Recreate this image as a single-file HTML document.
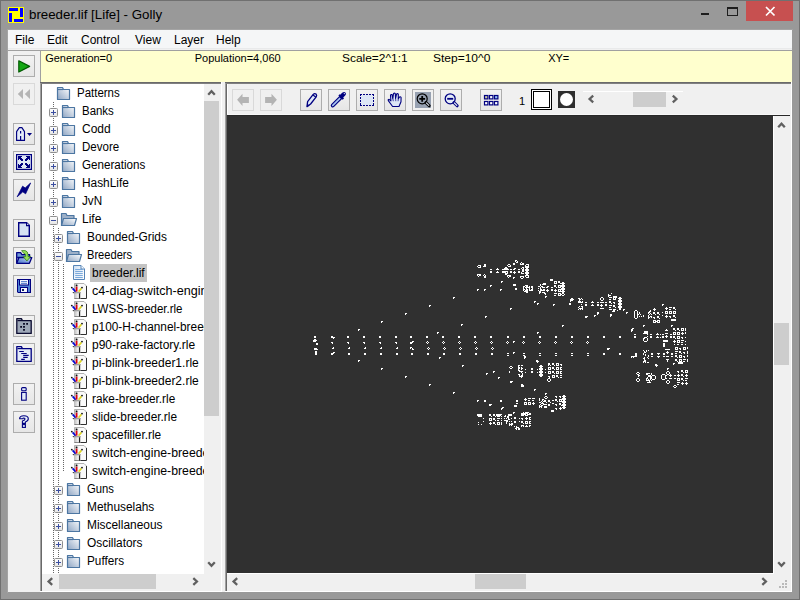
<!DOCTYPE html>
<html><head><meta charset="utf-8">
<style>
*{margin:0;padding:0;box-sizing:border-box}
html,body{width:800px;height:600px;overflow:hidden;background:#999}
body{position:relative;font-family:"Liberation Sans",sans-serif;font-size:12px;color:#000}
.a{position:absolute;display:block}
.t{position:absolute;white-space:pre;line-height:12px}
.btn{position:absolute;width:22px;height:22px;border:1px solid #adadad;background:linear-gradient(#f2f2f2,#e6e6e6)}
.dis{position:absolute;width:22px;height:22px;border:1px solid #d9d9d9;background:#f0f0f0}
</style></head><body>

<div class="a" style="left:0px;top:0px;width:800px;height:600px;background:#999;border:1px solid #707070"></div>
<div class="a" style="left:8px;top:7px;width:16px;height:16px;background:#ff0;"></div>
<div class="a" style="left:9px;top:8px;width:9px;height:3px;background:#00f;"></div>
<div class="a" style="left:20px;top:8px;width:3px;height:9px;background:#00f;"></div>
<div class="a" style="left:9px;top:13px;width:3px;height:9px;background:#00f;"></div>
<div class="a" style="left:14px;top:19px;width:9px;height:3px;background:#00f;"></div>
<div class="t" style="left:29px;top:8px;font-size:13.3px;line-height:13px">breeder.lif [Life] - Golly</div>
<div class="a" style="left:701px;top:13px;width:8px;height:2px;background:#1e1e1e;"></div>
<div class="a" style="left:727px;top:7px;width:11px;height:9px;border:1px solid #1e1e1e;border-top-width:2px"></div>
<div class="a" style="left:746px;top:1px;width:47px;height:20px;background:#c75050;"></div>
<svg class="a" style="left:746px;top:1px;" width="47" height="20" viewBox="746 1 47 20"><path d="M766 7 L774.5 15.5 M774.5 7 L766 15.5" stroke="#fff" stroke-width="1.7"/></svg>
<div class="a" style="left:7px;top:29px;width:786px;height:1px;background:#a4a4a4;"></div>
<div class="a" style="left:7px;top:29px;width:1px;height:564px;background:#a4a4a4;"></div>
<div class="a" style="left:8px;top:30px;width:784px;height:562px;background:#f0f0f0;"></div>
<div class="a" style="left:8px;top:30px;width:784px;height:18px;background:#f5f6f7;"></div>
<div class="a" style="left:8px;top:48px;width:784px;height:1px;background:#e9eaeb;"></div>
<div class="a" style="left:8px;top:49px;width:784px;height:1px;background:#f0f0f0;"></div>
<div class="a" style="left:8px;top:50px;width:784px;height:1px;background:#a0a0a0;"></div>
<div class="t" style="left:15px;top:34px;">File</div>
<div class="t" style="left:47px;top:34px;">Edit</div>
<div class="t" style="left:81px;top:34px;">Control</div>
<div class="t" style="left:135px;top:34px;">View</div>
<div class="t" style="left:174px;top:34px;">Layer</div>
<div class="t" style="left:216px;top:34px;">Help</div>
<div class="a" style="left:40px;top:51px;width:1px;height:541px;background:#a0a0a0;"></div>
<div class="a" style="left:41px;top:51px;width:751px;height:31px;background:#ffffce;"></div>
<div class="t" style="left:45.2px;top:52.3px;font-size:11px;line-height:12px;transform:scaleX(1);transform-origin:0 0">Generation=0</div>
<div class="t" style="left:194.7px;top:52.3px;font-size:11px;line-height:12px;transform:scaleX(1.0);transform-origin:0 0">Population=4,060</div>
<div class="t" style="left:341.6px;top:52.3px;font-size:11px;line-height:12px;transform:scaleX(1.085);transform-origin:0 0">Scale=2^1:1</div>
<div class="t" style="left:433.2px;top:52.3px;font-size:11px;line-height:12px;transform:scaleX(1.09);transform-origin:0 0">Step=10^0</div>
<div class="t" style="left:548.2px;top:52.3px;font-size:11px;line-height:12px;transform:scaleX(1);transform-origin:0 0">XY=</div>
<div class="btn" style="left:13px;top:55px"></div>
<svg class="a" style="left:13px;top:55px;" width="22" height="22" viewBox="13 55 22 22"><path d="M18.8 60.8 L29.6 66.4 L18.8 72 Z" fill="#14a814" stroke="#005a00" stroke-width="1.2" stroke-linejoin="round"/></svg>
<div class="dis" style="left:13px;top:83px"></div>
<svg class="a" style="left:13px;top:83px;" width="22" height="22" viewBox="13 83 22 22"><path d="M17.8 94 L23 89 L23 99 Z M24.8 94 L30 89 L30 99 Z" fill="#b4b4b4"/></svg>
<div class="btn" style="left:13px;top:123px"></div>
<svg class="a" style="left:13px;top:123px;" width="22" height="22" viewBox="13 123 22 22"><path d="M16.6 140.4 L16.6 131.6 L19.3 127.6 L21.9 127.6 L24.5 131.6 L24.5 140.4 Z" fill="#e4ecf8" stroke="#000080" stroke-width="1.15" stroke-linejoin="round"/><path d="M20.6 131 L20.6 133.6 M20.6 136 L20.6 140.5" stroke="#000080" stroke-width="1.2"/><path d="M27 133 L32 133 L29.5 136 Z" fill="#000080"/></svg>
<div class="btn" style="left:13px;top:151px"></div>
<svg class="a" style="left:13px;top:151px;" width="22" height="22" viewBox="13 151 22 22"><rect x="16" y="154" width="16" height="16" fill="#000080"/><rect x="17.2" y="155.2" width="13.6" height="13.6" fill="#e0e8f6"/><path d="M18 156h1v1h-1zM19 156h1v1h-1zM20 156h1v1h-1zM21 156h1v1h-1zM18 157h1v1h-1zM19 157h1v1h-1zM20 157h1v1h-1zM18 158h1v1h-1zM19 158h1v1h-1zM20 158h1v1h-1zM21 158h1v1h-1zM18 159h1v1h-1zM20 159h1v1h-1zM21 159h1v1h-1zM22 159h1v1h-1zM21 160h1v1h-1zM22 160h1v1h-1zM29 156h1v1h-1zM28 156h1v1h-1zM27 156h1v1h-1zM26 156h1v1h-1zM29 157h1v1h-1zM28 157h1v1h-1zM27 157h1v1h-1zM29 158h1v1h-1zM28 158h1v1h-1zM27 158h1v1h-1zM26 158h1v1h-1zM29 159h1v1h-1zM27 159h1v1h-1zM26 159h1v1h-1zM25 159h1v1h-1zM26 160h1v1h-1zM25 160h1v1h-1zM18 167h1v1h-1zM19 167h1v1h-1zM20 167h1v1h-1zM21 167h1v1h-1zM18 166h1v1h-1zM19 166h1v1h-1zM20 166h1v1h-1zM18 165h1v1h-1zM19 165h1v1h-1zM20 165h1v1h-1zM21 165h1v1h-1zM18 164h1v1h-1zM20 164h1v1h-1zM21 164h1v1h-1zM22 164h1v1h-1zM21 163h1v1h-1zM22 163h1v1h-1zM29 167h1v1h-1zM28 167h1v1h-1zM27 167h1v1h-1zM26 167h1v1h-1zM29 166h1v1h-1zM28 166h1v1h-1zM27 166h1v1h-1zM29 165h1v1h-1zM28 165h1v1h-1zM27 165h1v1h-1zM26 165h1v1h-1zM29 164h1v1h-1zM27 164h1v1h-1zM26 164h1v1h-1zM25 164h1v1h-1zM26 163h1v1h-1zM25 163h1v1h-1z" fill="#000080" shape-rendering="crispEdges"/></svg>
<div class="btn" style="left:13px;top:179px"></div>
<svg class="a" style="left:13px;top:179px;" width="22" height="22" viewBox="13 179 22 22"><path d="M17.2 196.8 L22.6 186.2 L25.2 188 L30.6 183 L25.6 193.8 L22.8 191.8 Z" fill="#000080" stroke="#000080" stroke-width="0.8" stroke-linejoin="round"/></svg>
<div class="btn" style="left:13px;top:219px"></div>
<svg class="a" style="left:13px;top:219px;" width="22" height="22" viewBox="13 219 22 22"><path d="M18.7 222.7 L26.6 222.7 L29.3 225.4 L29.3 236.3 L18.7 236.3 Z" fill="#d6e2f4" stroke="#000080" stroke-width="1.4"/><path d="M26.6 222.7 L26.6 225.6 L29.3 225.6" fill="#fff" stroke="#000080" stroke-width="1.2"/></svg>
<div class="btn" style="left:13px;top:247px"></div>
<svg class="a" style="left:13px;top:247px;" width="22" height="22" viewBox="13 247 22 22"><defs><linearGradient id="og" x1="0" y1="1" x2="1" y2="0"><stop offset="0" stop-color="#3c6cc8"/><stop offset="1" stop-color="#cfe0f8"/></linearGradient></defs><path d="M16.7 263.3 L16.7 252.7 L20.6 252.7 L22 254.6 L29.6 254.6 L29.6 257.5 L17.5 257.5" fill="#6f98d8" stroke="#000080" stroke-width="1.3" stroke-linejoin="round"/><path d="M16.7 263.3 L19 257.6 L31.8 257.6 L29.4 263.3 Z" fill="url(#og)" stroke="#000080" stroke-width="1.3" stroke-linejoin="round"/><path d="M21.6 250.6 L25.2 250.6 Q28 251.4 28 254.6 L28 256.6 L30.6 256.6 L26.9 261 L23.2 256.6 L25.6 256.6 L25.6 255 Q25.4 253.4 23.6 253.2 Z" fill="#96e05a" stroke="#2d7a10" stroke-width="0.7" stroke-linejoin="round"/></svg>
<div class="btn" style="left:13px;top:275px"></div>
<svg class="a" style="left:13px;top:275px;" width="22" height="22" viewBox="13 275 22 22"><path d="M17 279 H31 V293 H18 L17 292 Z" fill="#000080"/><rect x="18" y="280" width="12" height="12" fill="#4f82d2"/><rect x="19.5" y="279.5" width="9" height="5.5" fill="#f4f7fd" stroke="#000080" stroke-width="1"/><path d="M21 281.6 H27 M21 283.4 H27" stroke="#3d6cc4" stroke-width="0.9"/><rect x="20.5" y="287.5" width="7" height="5" fill="#f4f7fd" stroke="#000080" stroke-width="1"/><rect x="22" y="289" width="2" height="2" fill="#102060"/></svg>
<div class="btn" style="left:13px;top:315px"></div>
<svg class="a" style="left:13px;top:315px;" width="22" height="22" viewBox="13 315 22 22"><path d="M16.8 333.4 L16.8 318.6 L21.4 318.6 L22.4 320.6 L31.2 320.6 L31.2 333.4 Z" fill="#9ea8b8" stroke="#0a0a30" stroke-width="1.3" stroke-linejoin="round"/><path d="M17.5 320.6 L22 320.6" stroke="#0a0a30" stroke-width="1.2"/><path d="M23.1 323 h1.8 v1.8 h-1.8 Z M26.2 323 h1.8 v1.8 h-1.8 Z M20.2 326 h1.8 v1.8 h-1.8 Z M23.1 326 h1.8 v1.8 h-1.8 Z M23.1 329 h1.8 v1.8 h-1.8 Z" fill="#050520"/></svg>
<div class="btn" style="left:13px;top:343px"></div>
<svg class="a" style="left:13px;top:343px;" width="22" height="22" viewBox="13 343 22 22"><path d="M16.8 361.4 L16.8 346.6 L21.4 346.6 L22.4 348.6 L31.2 348.6 L31.2 361.4 Z" fill="#e3ebf8" stroke="#000080" stroke-width="1.3" stroke-linejoin="round"/><path d="M17.5 348.6 L22 348.6" stroke="#000080" stroke-width="1.2"/><path d="M19.2 351.5 L23.8 351.5 M21.2 353.5 L26.7 353.5 M23.2 355.4 L28.7 355.4 M23.2 357.4 L27.7 357.4 M21.2 359.4 L24.8 359.4" stroke="#000080" stroke-width="1.1"/></svg>
<div class="btn" style="left:13px;top:383px"></div>
<svg class="a" style="left:13px;top:383px;" width="22" height="22" viewBox="13 383 22 22"><rect x="21.6" y="387.6" width="4.6" height="3.2" rx="1" fill="#e3ebf8" stroke="#000080" stroke-width="1.1"/><rect x="21.6" y="392.4" width="4.6" height="7.8" fill="#e3ebf8" stroke="#000080" stroke-width="1.1"/></svg>
<div class="btn" style="left:13px;top:411px"></div>
<svg class="a" style="left:13px;top:411px;" width="22" height="22" viewBox="13 411 22 22"><path d="M19.6 418.8 Q19.6 415.8 23.9 415.8 Q28.3 415.8 28.3 418.8 Q28.3 421 25.4 422 L25.4 423.4 L22.4 423.4 L22.4 421 Q25 420.4 25 419 Q25 418 23.9 418 Q22.9 418 22.9 418.8 Z" fill="#e3ebf8" stroke="#000080" stroke-width="1.1" stroke-linejoin="round"/><rect x="22.4" y="424.6" width="3" height="2.8" fill="#e3ebf8" stroke="#000080" stroke-width="1.1"/></svg>
<div class="a" style="left:40px;top:82px;width:182px;height:510px;background:#fff;"></div>
<div class="a" style="left:40px;top:82px;width:1px;height:510px;background:#a0a0a0;"></div>
<div class="a" style="left:41px;top:83px;width:1px;height:508px;background:#696969;"></div>
<div class="a" style="left:40px;top:82px;width:182px;height:1px;background:#6a6a6a;"></div>
<div class="a" style="left:41px;top:83px;width:180px;height:1px;background:#808080;"></div>
<div class="a" style="left:221px;top:82px;width:1px;height:510px;background:#fff;"></div>
<div class="a" style="left:40px;top:591px;width:182px;height:1px;background:#fff;"></div>
<div class="a" style="left:204px;top:84px;width:17px;height:490px;background:#f0f0f0;"></div>
<div class="a" style="left:204px;top:101px;width:15px;height:315px;background:#cdcdcd;"></div>
<svg class="a" style="left:205px;top:86px;" width="12" height="12" viewBox="205 86 12 12"><path d="M208.2 94.7 L211.5 91.1 L214.8 94.7" fill="none" stroke="#606060" stroke-width="2.3"/></svg>
<svg class="a" style="left:205px;top:558px;" width="12" height="12" viewBox="205 558 12 12"><path d="M208.2 562.3 L211.5 565.9 L214.8 562.3" fill="none" stroke="#606060" stroke-width="2.3"/></svg>
<div class="a" style="left:42px;top:574px;width:179px;height:17px;background:#f0f0f0;"></div>
<div class="a" style="left:59px;top:574px;width:97px;height:15px;background:#cdcdcd;"></div>
<svg class="a" style="left:44px;top:575px;" width="12" height="12" viewBox="44 575 12 12"><path d="M52.2 578.2 L48.6 581.5 L52.2 584.8" fill="none" stroke="#606060" stroke-width="2.3"/></svg>
<svg class="a" style="left:189px;top:575px;" width="12" height="12" viewBox="189 575 12 12"><path d="M193.3 578.2 L196.9 581.5 L193.3 584.8" fill="none" stroke="#606060" stroke-width="2.3"/></svg>
<div class="a" style="left:42px;top:84px;width:162px;height:490px;overflow:hidden">
<svg class="a" style="left:0;top:0" width="162" height="490" viewBox="42 84 162 490"><defs><linearGradient id="fg" x1="0" y1="1" x2="1" y2="0"><stop offset="0" stop-color="#8ea5c3"/><stop offset="1" stop-color="#ffffff"/></linearGradient><linearGradient id="dg" x1="0" y1="0" x2="1" y2="1"><stop offset="0" stop-color="#c4daf2"/><stop offset="0.5" stop-color="#f4f8fd"/><stop offset="1" stop-color="#ffffff"/></linearGradient><linearGradient id="rg" x1="0" y1="0" x2="1" y2="0"><stop offset="0" stop-color="#c4c4c4"/><stop offset="1" stop-color="#fafafa"/></linearGradient><linearGradient id="cg" x1="0" y1="0" x2="1" y2="0"><stop offset="0" stop-color="#b8b8b8"/><stop offset="0.6" stop-color="#f4f4f4"/><stop offset="1" stop-color="#d0d0d0"/></linearGradient><linearGradient id="eg" x1="0" y1="0" x2="0" y2="1"><stop offset="0" stop-color="#ffffff"/><stop offset="1" stop-color="#e4e4e4"/></linearGradient></defs><path d="M53.5 102 L53.5 574" stroke="#666" stroke-width="1" stroke-dasharray="1 1"/><path d="M58.5 228 L58.5 574" stroke="#666" stroke-width="1" stroke-dasharray="1 1"/><path d="M63.5 264 L63.5 471" stroke="#666" stroke-width="1" stroke-dasharray="1 1"/><path d="M57.5 99.5 L57.5 87.5 L62.5 87.5 L63.5 89.5 L69.5 89.5 L69.5 99.5 Z" fill="url(#fg)" stroke="#4c76a2" stroke-width="1.2" stroke-linejoin="round"/><path d="M58 89.5 L63 89.5" stroke="#4c76a2" stroke-width="1.2"/><path d="M62.5 117.5 L62.5 105.5 L67.5 105.5 L68.5 107.5 L74.5 107.5 L74.5 117.5 Z" fill="url(#fg)" stroke="#4c76a2" stroke-width="1.2" stroke-linejoin="round"/><path d="M63 107.5 L68 107.5" stroke="#4c76a2" stroke-width="1.2"/><rect x="49.5" y="108.5" width="8" height="8" rx="1" fill="url(#eg)" stroke="#8f8f8f" stroke-width="1"/><path d="M51 112.5 L56 112.5" stroke="#3b4ea0" stroke-width="1"/><path d="M53.5 110 L53.5 115" stroke="#3b4ea0" stroke-width="1"/><path d="M62.5 135.5 L62.5 123.5 L67.5 123.5 L68.5 125.5 L74.5 125.5 L74.5 135.5 Z" fill="url(#fg)" stroke="#4c76a2" stroke-width="1.2" stroke-linejoin="round"/><path d="M63 125.5 L68 125.5" stroke="#4c76a2" stroke-width="1.2"/><rect x="49.5" y="126.5" width="8" height="8" rx="1" fill="url(#eg)" stroke="#8f8f8f" stroke-width="1"/><path d="M51 130.5 L56 130.5" stroke="#3b4ea0" stroke-width="1"/><path d="M53.5 128 L53.5 133" stroke="#3b4ea0" stroke-width="1"/><path d="M62.5 153.5 L62.5 141.5 L67.5 141.5 L68.5 143.5 L74.5 143.5 L74.5 153.5 Z" fill="url(#fg)" stroke="#4c76a2" stroke-width="1.2" stroke-linejoin="round"/><path d="M63 143.5 L68 143.5" stroke="#4c76a2" stroke-width="1.2"/><rect x="49.5" y="144.5" width="8" height="8" rx="1" fill="url(#eg)" stroke="#8f8f8f" stroke-width="1"/><path d="M51 148.5 L56 148.5" stroke="#3b4ea0" stroke-width="1"/><path d="M53.5 146 L53.5 151" stroke="#3b4ea0" stroke-width="1"/><path d="M62.5 171.5 L62.5 159.5 L67.5 159.5 L68.5 161.5 L74.5 161.5 L74.5 171.5 Z" fill="url(#fg)" stroke="#4c76a2" stroke-width="1.2" stroke-linejoin="round"/><path d="M63 161.5 L68 161.5" stroke="#4c76a2" stroke-width="1.2"/><rect x="49.5" y="162.5" width="8" height="8" rx="1" fill="url(#eg)" stroke="#8f8f8f" stroke-width="1"/><path d="M51 166.5 L56 166.5" stroke="#3b4ea0" stroke-width="1"/><path d="M53.5 164 L53.5 169" stroke="#3b4ea0" stroke-width="1"/><path d="M62.5 189.5 L62.5 177.5 L67.5 177.5 L68.5 179.5 L74.5 179.5 L74.5 189.5 Z" fill="url(#fg)" stroke="#4c76a2" stroke-width="1.2" stroke-linejoin="round"/><path d="M63 179.5 L68 179.5" stroke="#4c76a2" stroke-width="1.2"/><rect x="49.5" y="180.5" width="8" height="8" rx="1" fill="url(#eg)" stroke="#8f8f8f" stroke-width="1"/><path d="M51 184.5 L56 184.5" stroke="#3b4ea0" stroke-width="1"/><path d="M53.5 182 L53.5 187" stroke="#3b4ea0" stroke-width="1"/><path d="M62.5 207.5 L62.5 195.5 L67.5 195.5 L68.5 197.5 L74.5 197.5 L74.5 207.5 Z" fill="url(#fg)" stroke="#4c76a2" stroke-width="1.2" stroke-linejoin="round"/><path d="M63 197.5 L68 197.5" stroke="#4c76a2" stroke-width="1.2"/><rect x="49.5" y="198.5" width="8" height="8" rx="1" fill="url(#eg)" stroke="#8f8f8f" stroke-width="1"/><path d="M51 202.5 L56 202.5" stroke="#3b4ea0" stroke-width="1"/><path d="M53.5 200 L53.5 205" stroke="#3b4ea0" stroke-width="1"/><path d="M61.5 225.5 L61.5 213.5 L66 213.5 L67 215.5 L74 215.5 L74 225.5 Z" fill="#9db0c8" stroke="#4c76a2" stroke-width="1.2" stroke-linejoin="round"/><path d="M63.5 218.5 L76.5 218.5 L74.5 225.5 L61.5 225.5 Z" fill="url(#fg)" stroke="#4c76a2" stroke-width="1.2" stroke-linejoin="round"/><rect x="49.5" y="216.5" width="8" height="8" rx="1" fill="url(#eg)" stroke="#8f8f8f" stroke-width="1"/><path d="M51 220.5 L56 220.5" stroke="#3b4ea0" stroke-width="1"/><path d="M67.5 243.5 L67.5 231.5 L72.5 231.5 L73.5 233.5 L79.5 233.5 L79.5 243.5 Z" fill="url(#fg)" stroke="#4c76a2" stroke-width="1.2" stroke-linejoin="round"/><path d="M68 233.5 L73 233.5" stroke="#4c76a2" stroke-width="1.2"/><rect x="54.5" y="234.5" width="8" height="8" rx="1" fill="url(#eg)" stroke="#8f8f8f" stroke-width="1"/><path d="M56 238.5 L61 238.5" stroke="#3b4ea0" stroke-width="1"/><path d="M58.5 236 L58.5 241" stroke="#3b4ea0" stroke-width="1"/><path d="M66.5 261.5 L66.5 249.5 L71 249.5 L72 251.5 L79 251.5 L79 261.5 Z" fill="#9db0c8" stroke="#4c76a2" stroke-width="1.2" stroke-linejoin="round"/><path d="M68.5 254.5 L81.5 254.5 L79.5 261.5 L66.5 261.5 Z" fill="url(#fg)" stroke="#4c76a2" stroke-width="1.2" stroke-linejoin="round"/><rect x="54.5" y="252.5" width="8" height="8" rx="1" fill="url(#eg)" stroke="#8f8f8f" stroke-width="1"/><path d="M56 256.5 L61 256.5" stroke="#3b4ea0" stroke-width="1"/><path d="M73.5 265.5 L81 265.5 L84.5 269 L84.5 279.5 L73.5 279.5 Z" fill="url(#dg)" stroke="#5685b8" stroke-width="1"/><path d="M81 265.5 L81 269 L84.5 269" fill="#fff" stroke="#5685b8" stroke-width="1"/><path d="M75.2 269.6 L82.8 269.6" stroke="#6fa2d8" stroke-width="1"/><path d="M75.2 271.6 L82.8 271.6" stroke="#6fa2d8" stroke-width="1"/><path d="M75.2 273.6 L82.8 273.6" stroke="#6fa2d8" stroke-width="1"/><path d="M75.2 275.6 L82.8 275.6" stroke="#6fa2d8" stroke-width="1"/><path d="M75.2 277.6 L82.8 277.6" stroke="#6fa2d8" stroke-width="1"/><path d="M74.5 283.5 L84 283.5 L86.5 286 L86.5 298.5 L74.5 298.5 Z" fill="#fafafa"/><rect x="74.5" y="283.5" width="4.5" height="15" fill="url(#rg)"/><path d="M74.5 298.5 L74.5 283.5 L84 283.5 L86.5 286" fill="none" stroke="#b0b0b0" stroke-width="1"/><path d="M86.5 286 L86.5 298.5 L74.5 298.5" fill="none" stroke="#303030" stroke-width="1"/><rect x="74" y="292.2" width="6.8" height="6.3" fill="url(#cg)"/><path d="M73.6 292.7 L80.8 292.7" stroke="#9a9a9a" stroke-width="1.2"/><path d="M79.5 293.3 L79.5 298.6" stroke="#202020" stroke-width="1.1"/><path d="M72.6 288.4 L75.6 291.8" stroke="#0008d8" stroke-width="1.7"/><path d="M76.6 286.6 L76.6 291.6" stroke="#e00010" stroke-width="1.7"/><path d="M81.4 288.4 L78.6 291.8" stroke="#e0d820" stroke-width="1.7"/><circle cx="71.8" cy="287.6" r="0.9" fill="#111"/><circle cx="76.6" cy="285.4" r="0.9" fill="#111"/><circle cx="82" cy="287.6" r="0.9" fill="#111"/><circle cx="73.3" cy="292.6" r="0.6" fill="#111"/><path d="M74.5 301.5 L84 301.5 L86.5 304 L86.5 316.5 L74.5 316.5 Z" fill="#fafafa"/><rect x="74.5" y="301.5" width="4.5" height="15" fill="url(#rg)"/><path d="M74.5 316.5 L74.5 301.5 L84 301.5 L86.5 304" fill="none" stroke="#b0b0b0" stroke-width="1"/><path d="M86.5 304 L86.5 316.5 L74.5 316.5" fill="none" stroke="#303030" stroke-width="1"/><rect x="74" y="310.2" width="6.8" height="6.3" fill="url(#cg)"/><path d="M73.6 310.7 L80.8 310.7" stroke="#9a9a9a" stroke-width="1.2"/><path d="M79.5 311.3 L79.5 316.6" stroke="#202020" stroke-width="1.1"/><path d="M72.6 306.4 L75.6 309.8" stroke="#0008d8" stroke-width="1.7"/><path d="M76.6 304.6 L76.6 309.6" stroke="#e00010" stroke-width="1.7"/><path d="M81.4 306.4 L78.6 309.8" stroke="#e0d820" stroke-width="1.7"/><circle cx="71.8" cy="305.6" r="0.9" fill="#111"/><circle cx="76.6" cy="303.4" r="0.9" fill="#111"/><circle cx="82" cy="305.6" r="0.9" fill="#111"/><circle cx="73.3" cy="310.6" r="0.6" fill="#111"/><path d="M74.5 319.5 L84 319.5 L86.5 322 L86.5 334.5 L74.5 334.5 Z" fill="#fafafa"/><rect x="74.5" y="319.5" width="4.5" height="15" fill="url(#rg)"/><path d="M74.5 334.5 L74.5 319.5 L84 319.5 L86.5 322" fill="none" stroke="#b0b0b0" stroke-width="1"/><path d="M86.5 322 L86.5 334.5 L74.5 334.5" fill="none" stroke="#303030" stroke-width="1"/><rect x="74" y="328.2" width="6.8" height="6.3" fill="url(#cg)"/><path d="M73.6 328.7 L80.8 328.7" stroke="#9a9a9a" stroke-width="1.2"/><path d="M79.5 329.3 L79.5 334.6" stroke="#202020" stroke-width="1.1"/><path d="M72.6 324.4 L75.6 327.8" stroke="#0008d8" stroke-width="1.7"/><path d="M76.6 322.6 L76.6 327.6" stroke="#e00010" stroke-width="1.7"/><path d="M81.4 324.4 L78.6 327.8" stroke="#e0d820" stroke-width="1.7"/><circle cx="71.8" cy="323.6" r="0.9" fill="#111"/><circle cx="76.6" cy="321.4" r="0.9" fill="#111"/><circle cx="82" cy="323.6" r="0.9" fill="#111"/><circle cx="73.3" cy="328.6" r="0.6" fill="#111"/><path d="M74.5 337.5 L84 337.5 L86.5 340 L86.5 352.5 L74.5 352.5 Z" fill="#fafafa"/><rect x="74.5" y="337.5" width="4.5" height="15" fill="url(#rg)"/><path d="M74.5 352.5 L74.5 337.5 L84 337.5 L86.5 340" fill="none" stroke="#b0b0b0" stroke-width="1"/><path d="M86.5 340 L86.5 352.5 L74.5 352.5" fill="none" stroke="#303030" stroke-width="1"/><rect x="74" y="346.2" width="6.8" height="6.3" fill="url(#cg)"/><path d="M73.6 346.7 L80.8 346.7" stroke="#9a9a9a" stroke-width="1.2"/><path d="M79.5 347.3 L79.5 352.6" stroke="#202020" stroke-width="1.1"/><path d="M72.6 342.4 L75.6 345.8" stroke="#0008d8" stroke-width="1.7"/><path d="M76.6 340.6 L76.6 345.6" stroke="#e00010" stroke-width="1.7"/><path d="M81.4 342.4 L78.6 345.8" stroke="#e0d820" stroke-width="1.7"/><circle cx="71.8" cy="341.6" r="0.9" fill="#111"/><circle cx="76.6" cy="339.4" r="0.9" fill="#111"/><circle cx="82" cy="341.6" r="0.9" fill="#111"/><circle cx="73.3" cy="346.6" r="0.6" fill="#111"/><path d="M74.5 355.5 L84 355.5 L86.5 358 L86.5 370.5 L74.5 370.5 Z" fill="#fafafa"/><rect x="74.5" y="355.5" width="4.5" height="15" fill="url(#rg)"/><path d="M74.5 370.5 L74.5 355.5 L84 355.5 L86.5 358" fill="none" stroke="#b0b0b0" stroke-width="1"/><path d="M86.5 358 L86.5 370.5 L74.5 370.5" fill="none" stroke="#303030" stroke-width="1"/><rect x="74" y="364.2" width="6.8" height="6.3" fill="url(#cg)"/><path d="M73.6 364.7 L80.8 364.7" stroke="#9a9a9a" stroke-width="1.2"/><path d="M79.5 365.3 L79.5 370.6" stroke="#202020" stroke-width="1.1"/><path d="M72.6 360.4 L75.6 363.8" stroke="#0008d8" stroke-width="1.7"/><path d="M76.6 358.6 L76.6 363.6" stroke="#e00010" stroke-width="1.7"/><path d="M81.4 360.4 L78.6 363.8" stroke="#e0d820" stroke-width="1.7"/><circle cx="71.8" cy="359.6" r="0.9" fill="#111"/><circle cx="76.6" cy="357.4" r="0.9" fill="#111"/><circle cx="82" cy="359.6" r="0.9" fill="#111"/><circle cx="73.3" cy="364.6" r="0.6" fill="#111"/><path d="M74.5 373.5 L84 373.5 L86.5 376 L86.5 388.5 L74.5 388.5 Z" fill="#fafafa"/><rect x="74.5" y="373.5" width="4.5" height="15" fill="url(#rg)"/><path d="M74.5 388.5 L74.5 373.5 L84 373.5 L86.5 376" fill="none" stroke="#b0b0b0" stroke-width="1"/><path d="M86.5 376 L86.5 388.5 L74.5 388.5" fill="none" stroke="#303030" stroke-width="1"/><rect x="74" y="382.2" width="6.8" height="6.3" fill="url(#cg)"/><path d="M73.6 382.7 L80.8 382.7" stroke="#9a9a9a" stroke-width="1.2"/><path d="M79.5 383.3 L79.5 388.6" stroke="#202020" stroke-width="1.1"/><path d="M72.6 378.4 L75.6 381.8" stroke="#0008d8" stroke-width="1.7"/><path d="M76.6 376.6 L76.6 381.6" stroke="#e00010" stroke-width="1.7"/><path d="M81.4 378.4 L78.6 381.8" stroke="#e0d820" stroke-width="1.7"/><circle cx="71.8" cy="377.6" r="0.9" fill="#111"/><circle cx="76.6" cy="375.4" r="0.9" fill="#111"/><circle cx="82" cy="377.6" r="0.9" fill="#111"/><circle cx="73.3" cy="382.6" r="0.6" fill="#111"/><path d="M74.5 391.5 L84 391.5 L86.5 394 L86.5 406.5 L74.5 406.5 Z" fill="#fafafa"/><rect x="74.5" y="391.5" width="4.5" height="15" fill="url(#rg)"/><path d="M74.5 406.5 L74.5 391.5 L84 391.5 L86.5 394" fill="none" stroke="#b0b0b0" stroke-width="1"/><path d="M86.5 394 L86.5 406.5 L74.5 406.5" fill="none" stroke="#303030" stroke-width="1"/><rect x="74" y="400.2" width="6.8" height="6.3" fill="url(#cg)"/><path d="M73.6 400.7 L80.8 400.7" stroke="#9a9a9a" stroke-width="1.2"/><path d="M79.5 401.3 L79.5 406.6" stroke="#202020" stroke-width="1.1"/><path d="M72.6 396.4 L75.6 399.8" stroke="#0008d8" stroke-width="1.7"/><path d="M76.6 394.6 L76.6 399.6" stroke="#e00010" stroke-width="1.7"/><path d="M81.4 396.4 L78.6 399.8" stroke="#e0d820" stroke-width="1.7"/><circle cx="71.8" cy="395.6" r="0.9" fill="#111"/><circle cx="76.6" cy="393.4" r="0.9" fill="#111"/><circle cx="82" cy="395.6" r="0.9" fill="#111"/><circle cx="73.3" cy="400.6" r="0.6" fill="#111"/><path d="M74.5 409.5 L84 409.5 L86.5 412 L86.5 424.5 L74.5 424.5 Z" fill="#fafafa"/><rect x="74.5" y="409.5" width="4.5" height="15" fill="url(#rg)"/><path d="M74.5 424.5 L74.5 409.5 L84 409.5 L86.5 412" fill="none" stroke="#b0b0b0" stroke-width="1"/><path d="M86.5 412 L86.5 424.5 L74.5 424.5" fill="none" stroke="#303030" stroke-width="1"/><rect x="74" y="418.2" width="6.8" height="6.3" fill="url(#cg)"/><path d="M73.6 418.7 L80.8 418.7" stroke="#9a9a9a" stroke-width="1.2"/><path d="M79.5 419.3 L79.5 424.6" stroke="#202020" stroke-width="1.1"/><path d="M72.6 414.4 L75.6 417.8" stroke="#0008d8" stroke-width="1.7"/><path d="M76.6 412.6 L76.6 417.6" stroke="#e00010" stroke-width="1.7"/><path d="M81.4 414.4 L78.6 417.8" stroke="#e0d820" stroke-width="1.7"/><circle cx="71.8" cy="413.6" r="0.9" fill="#111"/><circle cx="76.6" cy="411.4" r="0.9" fill="#111"/><circle cx="82" cy="413.6" r="0.9" fill="#111"/><circle cx="73.3" cy="418.6" r="0.6" fill="#111"/><path d="M74.5 427.5 L84 427.5 L86.5 430 L86.5 442.5 L74.5 442.5 Z" fill="#fafafa"/><rect x="74.5" y="427.5" width="4.5" height="15" fill="url(#rg)"/><path d="M74.5 442.5 L74.5 427.5 L84 427.5 L86.5 430" fill="none" stroke="#b0b0b0" stroke-width="1"/><path d="M86.5 430 L86.5 442.5 L74.5 442.5" fill="none" stroke="#303030" stroke-width="1"/><rect x="74" y="436.2" width="6.8" height="6.3" fill="url(#cg)"/><path d="M73.6 436.7 L80.8 436.7" stroke="#9a9a9a" stroke-width="1.2"/><path d="M79.5 437.3 L79.5 442.6" stroke="#202020" stroke-width="1.1"/><path d="M72.6 432.4 L75.6 435.8" stroke="#0008d8" stroke-width="1.7"/><path d="M76.6 430.6 L76.6 435.6" stroke="#e00010" stroke-width="1.7"/><path d="M81.4 432.4 L78.6 435.8" stroke="#e0d820" stroke-width="1.7"/><circle cx="71.8" cy="431.6" r="0.9" fill="#111"/><circle cx="76.6" cy="429.4" r="0.9" fill="#111"/><circle cx="82" cy="431.6" r="0.9" fill="#111"/><circle cx="73.3" cy="436.6" r="0.6" fill="#111"/><path d="M74.5 445.5 L84 445.5 L86.5 448 L86.5 460.5 L74.5 460.5 Z" fill="#fafafa"/><rect x="74.5" y="445.5" width="4.5" height="15" fill="url(#rg)"/><path d="M74.5 460.5 L74.5 445.5 L84 445.5 L86.5 448" fill="none" stroke="#b0b0b0" stroke-width="1"/><path d="M86.5 448 L86.5 460.5 L74.5 460.5" fill="none" stroke="#303030" stroke-width="1"/><rect x="74" y="454.2" width="6.8" height="6.3" fill="url(#cg)"/><path d="M73.6 454.7 L80.8 454.7" stroke="#9a9a9a" stroke-width="1.2"/><path d="M79.5 455.3 L79.5 460.6" stroke="#202020" stroke-width="1.1"/><path d="M72.6 450.4 L75.6 453.8" stroke="#0008d8" stroke-width="1.7"/><path d="M76.6 448.6 L76.6 453.6" stroke="#e00010" stroke-width="1.7"/><path d="M81.4 450.4 L78.6 453.8" stroke="#e0d820" stroke-width="1.7"/><circle cx="71.8" cy="449.6" r="0.9" fill="#111"/><circle cx="76.6" cy="447.4" r="0.9" fill="#111"/><circle cx="82" cy="449.6" r="0.9" fill="#111"/><circle cx="73.3" cy="454.6" r="0.6" fill="#111"/><path d="M74.5 463.5 L84 463.5 L86.5 466 L86.5 478.5 L74.5 478.5 Z" fill="#fafafa"/><rect x="74.5" y="463.5" width="4.5" height="15" fill="url(#rg)"/><path d="M74.5 478.5 L74.5 463.5 L84 463.5 L86.5 466" fill="none" stroke="#b0b0b0" stroke-width="1"/><path d="M86.5 466 L86.5 478.5 L74.5 478.5" fill="none" stroke="#303030" stroke-width="1"/><rect x="74" y="472.2" width="6.8" height="6.3" fill="url(#cg)"/><path d="M73.6 472.7 L80.8 472.7" stroke="#9a9a9a" stroke-width="1.2"/><path d="M79.5 473.3 L79.5 478.6" stroke="#202020" stroke-width="1.1"/><path d="M72.6 468.4 L75.6 471.8" stroke="#0008d8" stroke-width="1.7"/><path d="M76.6 466.6 L76.6 471.6" stroke="#e00010" stroke-width="1.7"/><path d="M81.4 468.4 L78.6 471.8" stroke="#e0d820" stroke-width="1.7"/><circle cx="71.8" cy="467.6" r="0.9" fill="#111"/><circle cx="76.6" cy="465.4" r="0.9" fill="#111"/><circle cx="82" cy="467.6" r="0.9" fill="#111"/><circle cx="73.3" cy="472.6" r="0.6" fill="#111"/><path d="M67.5 495.5 L67.5 483.5 L72.5 483.5 L73.5 485.5 L79.5 485.5 L79.5 495.5 Z" fill="url(#fg)" stroke="#4c76a2" stroke-width="1.2" stroke-linejoin="round"/><path d="M68 485.5 L73 485.5" stroke="#4c76a2" stroke-width="1.2"/><rect x="54.5" y="486.5" width="8" height="8" rx="1" fill="url(#eg)" stroke="#8f8f8f" stroke-width="1"/><path d="M56 490.5 L61 490.5" stroke="#3b4ea0" stroke-width="1"/><path d="M58.5 488 L58.5 493" stroke="#3b4ea0" stroke-width="1"/><path d="M67.5 513.5 L67.5 501.5 L72.5 501.5 L73.5 503.5 L79.5 503.5 L79.5 513.5 Z" fill="url(#fg)" stroke="#4c76a2" stroke-width="1.2" stroke-linejoin="round"/><path d="M68 503.5 L73 503.5" stroke="#4c76a2" stroke-width="1.2"/><rect x="54.5" y="504.5" width="8" height="8" rx="1" fill="url(#eg)" stroke="#8f8f8f" stroke-width="1"/><path d="M56 508.5 L61 508.5" stroke="#3b4ea0" stroke-width="1"/><path d="M58.5 506 L58.5 511" stroke="#3b4ea0" stroke-width="1"/><path d="M67.5 531.5 L67.5 519.5 L72.5 519.5 L73.5 521.5 L79.5 521.5 L79.5 531.5 Z" fill="url(#fg)" stroke="#4c76a2" stroke-width="1.2" stroke-linejoin="round"/><path d="M68 521.5 L73 521.5" stroke="#4c76a2" stroke-width="1.2"/><rect x="54.5" y="522.5" width="8" height="8" rx="1" fill="url(#eg)" stroke="#8f8f8f" stroke-width="1"/><path d="M56 526.5 L61 526.5" stroke="#3b4ea0" stroke-width="1"/><path d="M58.5 524 L58.5 529" stroke="#3b4ea0" stroke-width="1"/><path d="M67.5 549.5 L67.5 537.5 L72.5 537.5 L73.5 539.5 L79.5 539.5 L79.5 549.5 Z" fill="url(#fg)" stroke="#4c76a2" stroke-width="1.2" stroke-linejoin="round"/><path d="M68 539.5 L73 539.5" stroke="#4c76a2" stroke-width="1.2"/><rect x="54.5" y="540.5" width="8" height="8" rx="1" fill="url(#eg)" stroke="#8f8f8f" stroke-width="1"/><path d="M56 544.5 L61 544.5" stroke="#3b4ea0" stroke-width="1"/><path d="M58.5 542 L58.5 547" stroke="#3b4ea0" stroke-width="1"/><path d="M67.5 567.5 L67.5 555.5 L72.5 555.5 L73.5 557.5 L79.5 557.5 L79.5 567.5 Z" fill="url(#fg)" stroke="#4c76a2" stroke-width="1.2" stroke-linejoin="round"/><path d="M68 557.5 L73 557.5" stroke="#4c76a2" stroke-width="1.2"/><rect x="54.5" y="558.5" width="8" height="8" rx="1" fill="url(#eg)" stroke="#8f8f8f" stroke-width="1"/><path d="M56 562.5 L61 562.5" stroke="#3b4ea0" stroke-width="1"/><path d="M58.5 560 L58.5 565" stroke="#3b4ea0" stroke-width="1"/></svg>
<div class="a" style="left:48px;top:180px;width:57px;height:18px;background:#c3c3c3"></div>
<div class="t" style="left:35px;top:3px;transform:scaleX(0.955);transform-origin:0 0">Patterns</div>
<div class="t" style="left:40px;top:21px;transform:scaleX(0.953);transform-origin:0 0">Banks</div>
<div class="t" style="left:40px;top:39px;transform:scaleX(1.0);transform-origin:0 0">Codd</div>
<div class="t" style="left:40px;top:57px;transform:scaleX(0.961);transform-origin:0 0">Devore</div>
<div class="t" style="left:40px;top:75px;transform:scaleX(0.969);transform-origin:0 0">Generations</div>
<div class="t" style="left:40px;top:93px;transform:scaleX(0.989);transform-origin:0 0">HashLife</div>
<div class="t" style="left:40px;top:111px;transform:scaleX(0.974);transform-origin:0 0">JvN</div>
<div class="t" style="left:40px;top:129px;transform:scaleX(1.0);transform-origin:0 0">Life</div>
<div class="t" style="left:45px;top:147px;transform:scaleX(0.99);transform-origin:0 0">Bounded-Grids</div>
<div class="t" style="left:45px;top:165px;transform:scaleX(0.927);transform-origin:0 0">Breeders</div>
<div class="t" style="left:50px;top:183px;transform:scaleX(1.0);transform-origin:0 0">breeder.lif</div>
<div class="t" style="left:50px;top:201px;transform:scaleX(1.05);transform-origin:0 0">c4-diag-switch-engines.rle</div>
<div class="t" style="left:50px;top:219px;transform:scaleX(0.958);transform-origin:0 0">LWSS-breeder.rle</div>
<div class="t" style="left:50px;top:237px;transform:scaleX(0.985);transform-origin:0 0">p100-H-channel-breeder.rle</div>
<div class="t" style="left:50px;top:255px;transform:scaleX(1.0);transform-origin:0 0">p90-rake-factory.rle</div>
<div class="t" style="left:50px;top:273px;transform:scaleX(1.0);transform-origin:0 0">pi-blink-breeder1.rle</div>
<div class="t" style="left:50px;top:291px;transform:scaleX(1.0);transform-origin:0 0">pi-blink-breeder2.rle</div>
<div class="t" style="left:50px;top:309px;transform:scaleX(0.982);transform-origin:0 0">rake-breeder.rle</div>
<div class="t" style="left:50px;top:327px;transform:scaleX(0.988);transform-origin:0 0">slide-breeder.rle</div>
<div class="t" style="left:50px;top:345px;transform:scaleX(0.988);transform-origin:0 0">spacefiller.rle</div>
<div class="t" style="left:50px;top:363px;transform:scaleX(1.023);transform-origin:0 0">switch-engine-breeder-1.rle</div>
<div class="t" style="left:50px;top:381px;transform:scaleX(1.023);transform-origin:0 0">switch-engine-breeder-2.rle</div>
<div class="t" style="left:45px;top:399px;transform:scaleX(0.938);transform-origin:0 0">Guns</div>
<div class="t" style="left:45px;top:417px;transform:scaleX(0.989);transform-origin:0 0">Methuselahs</div>
<div class="t" style="left:45px;top:435px;transform:scaleX(0.993);transform-origin:0 0">Miscellaneous</div>
<div class="t" style="left:45px;top:453px;transform:scaleX(0.991);transform-origin:0 0">Oscillators</div>
<div class="t" style="left:45px;top:471px;transform:scaleX(0.98);transform-origin:0 0">Puffers</div>
</div>
<div class="a" style="left:225px;top:82px;width:567px;height:510px;background:#f0f0f0;"></div>
<div class="a" style="left:225px;top:82px;width:1px;height:510px;background:#a0a0a0;"></div>
<div class="a" style="left:226px;top:83px;width:1px;height:508px;background:#696969;"></div>
<div class="a" style="left:225px;top:82px;width:567px;height:1px;background:#6a6a6a;"></div>
<div class="a" style="left:226px;top:83px;width:565px;height:1px;background:#808080;"></div>
<div class="a" style="left:791px;top:82px;width:1px;height:510px;background:#fff;"></div>
<div class="a" style="left:225px;top:591px;width:567px;height:1px;background:#fff;"></div>
<div class="a" style="left:227px;top:84px;width:1px;height:31px;background:#fff;"></div>
<div class="a" style="left:227px;top:114px;width:563px;height:1px;background:#f8f8f8;"></div>
<div class="a" style="left:227px;top:115px;width:563px;height:1px;background:#282828;"></div>
<div class="dis" style="left:232px;top:89px"></div>
<svg class="a" style="left:232px;top:89px;" width="22" height="22" viewBox="232 89 22 22"><path d="M237.1 99.8 L242.5 93.8 L242.5 97.1 L248.9 97.1 L248.9 102.9 L242.5 102.9 L242.5 105.9 Z" fill="#b4b4b4"/></svg>
<div class="dis" style="left:260px;top:89px"></div>
<svg class="a" style="left:260px;top:89px;" width="22" height="22" viewBox="260 89 22 22"><path d="M276.9 99.8 L271.5 93.8 L271.5 97.1 L265.1 97.1 L265.1 102.9 L271.5 102.9 L271.5 105.9 Z" fill="#b4b4b4"/></svg>
<div class="btn" style="left:300px;top:89px"></div>
<svg class="a" style="left:300px;top:89px;" width="22" height="22" viewBox="300 89 22 22"><path d="M307 106.6 L307.6 101.6 L313.2 94.4 Q314.6 93 316 94 Q317.2 95.2 316.2 96.8 L310.6 104 Z" fill="#dfe8f8" stroke="#000080" stroke-width="1.3" stroke-linejoin="round"/><path d="M313 95 L316 97.2" stroke="#000080" stroke-width="1.1"/><path d="M306.8 107 L307.4 104 L309.6 105.4 Z" fill="#000080"/></svg>
<div class="btn" style="left:328px;top:89px"></div>
<svg class="a" style="left:328px;top:89px;" width="22" height="22" viewBox="328 89 22 22"><path d="M331.8 106.6 Q330.8 105.6 331.8 104.4 L339.6 96.6 L341.6 98.6 L333.8 106.4 Q332.8 107.4 331.8 106.6 Z" fill="#a8c4f0" stroke="#000080" stroke-width="1.2" stroke-linejoin="round"/><path d="M338.4 95.6 L342.6 99.8 L344 98.4 L343.2 97.6 L345.2 95.6 Q346.8 93.6 345.4 92.4 Q344 91.2 342.2 92.8 L340.2 94.8 L339.6 94.2 Z" fill="#000080"/><circle cx="344.3" cy="93.6" r="0.6" fill="#fff"/></svg>
<div class="btn" style="left:356px;top:89px"></div>
<svg class="a" style="left:356px;top:89px;" width="22" height="22" viewBox="356 89 22 22"><rect x="361" y="95" width="12" height="10" fill="#dde6f6"/><path d="M360 94h1v1h-1zM360 105h1v1h-1zM361 94h1v1h-1zM361 105h1v1h-1zM363 94h1v1h-1zM363 105h1v1h-1zM364 94h1v1h-1zM364 105h1v1h-1zM366 94h1v1h-1zM366 105h1v1h-1zM367 94h1v1h-1zM367 105h1v1h-1zM369 94h1v1h-1zM369 105h1v1h-1zM370 94h1v1h-1zM370 105h1v1h-1zM372 94h1v1h-1zM372 105h1v1h-1zM373 94h1v1h-1zM373 105h1v1h-1zM360 94h1v1h-1zM373 94h1v1h-1zM360 95h1v1h-1zM373 95h1v1h-1zM360 97h1v1h-1zM373 97h1v1h-1zM360 98h1v1h-1zM373 98h1v1h-1zM360 100h1v1h-1zM373 100h1v1h-1zM360 101h1v1h-1zM373 101h1v1h-1zM360 103h1v1h-1zM373 103h1v1h-1zM360 104h1v1h-1zM373 104h1v1h-1z" fill="#000080" shape-rendering="crispEdges"/></svg>
<div class="btn" style="left:384px;top:89px"></div>
<svg class="a" style="left:384px;top:89px;" width="22" height="22" viewBox="384 89 22 22"><path d="M392.6 106.5 L388.3 100.6 Q387.9 99.3 389.1 99.3 L390.9 100.8 L390.5 95.4 Q390.9 94.2 392 94.6 L392.8 98.6 L393.5 93.6 Q394.4 92.7 395.3 93.6 L395.6 98.4 L396.6 94 Q397.5 93.3 398.3 94.2 L398.3 98.8 L399.6 96.9 Q400.6 96.4 401.1 97.4 L401 101.8 L399 106.5 Z" fill="#dde6f6" stroke="#000080" stroke-width="1.1" stroke-linejoin="round"/><path d="M392.9 98.8 L393.3 101.2 M395.6 98.6 L395.8 101.2 M398.3 98.8 L398.1 101.2" stroke="#000080" stroke-width="0.7"/></svg>
<div class="btn" style="left:412px;top:89px;background:#f0f0f0"></div>
<div class="a" style="left:415px;top:92px;width:16px;height:16px;background:#98a2b2;"></div>
<svg class="a" style="left:412px;top:89px;" width="22" height="22" viewBox="412 89 22 22"><circle cx="422.2" cy="98.8" r="5" fill="none" stroke="#000" stroke-width="1.2"/><path d="M426 102.6 L429.2 105.8" stroke="#000" stroke-width="3" stroke-linecap="round"/><path d="M426.4 103 L428.8 105.4" stroke="#c8d0dc" stroke-width="1.1" stroke-linecap="round"/><path d="M419.3 98.8 L425.1 98.8 M422.2 95.9 L422.2 101.7" stroke="#000" stroke-width="1.8"/></svg>
<div class="btn" style="left:440px;top:89px"></div>
<svg class="a" style="left:440px;top:89px;" width="22" height="22" viewBox="440 89 22 22"><circle cx="450.2" cy="98.8" r="5" fill="#e4ecf8" stroke="#000080" stroke-width="1.3"/><path d="M454 102.6 L457.2 105.8" stroke="#000080" stroke-width="3" stroke-linecap="round"/><path d="M454.4 103 L456.8 105.4" stroke="#e4ecf8" stroke-width="1.1" stroke-linecap="round"/><path d="M447.2 98.8 L453.2 98.8" stroke="#000080" stroke-width="1.8"/></svg>
<div class="btn" style="left:480px;top:89px"></div>
<svg class="a" style="left:480px;top:89px;" width="22" height="22" viewBox="480 89 22 22"><rect x="484.5" y="95.5" width="3.4" height="3.4" fill="#c8c8a0" stroke="#000080" stroke-width="1.2"/><rect x="489.5" y="95.5" width="3.4" height="3.4" fill="#fff" stroke="#000080" stroke-width="1.2"/><rect x="494.5" y="95.5" width="3.4" height="3.4" fill="#90c0f0" stroke="#000080" stroke-width="1.2"/><rect x="484.5" y="101.5" width="3.4" height="3.4" fill="#fff" stroke="#000080" stroke-width="1.2"/><rect x="489.5" y="101.5" width="3.4" height="3.4" fill="#fff" stroke="#000080" stroke-width="1.2"/><rect x="494.5" y="101.5" width="3.4" height="3.4" fill="#fff" stroke="#000080" stroke-width="1.2"/></svg>
<div class="t" style="left:519px;top:95px;font-size:11px;line-height:12px">1</div>
<svg class="a" style="left:531px;top:89px;" width="21" height="21" viewBox="531 89 21 21"><rect x="531.5" y="89.5" width="20" height="20" fill="#fff" stroke="#000" stroke-width="1"/><rect x="533.5" y="91.5" width="16" height="16" fill="#fff" stroke="#000" stroke-width="1"/></svg>
<div class="a" style="left:558px;top:91px;width:17px;height:17px;background:#2e2e2e;"></div>
<svg class="a" style="left:558px;top:91px;" width="17" height="17" viewBox="558 91 17 17"><circle cx="566.5" cy="99.5" r="6.5" fill="#fff"/></svg>
<div class="a" style="left:583px;top:91px;width:100px;height:1px;background:#fff;"></div>
<svg class="a" style="left:585px;top:93px;" width="12" height="12" viewBox="585 93 12 12"><path d="M593.2 95.7 L589.6 99 L593.2 102.3" fill="none" stroke="#606060" stroke-width="2.3"/></svg>
<svg class="a" style="left:669px;top:93px;" width="12" height="12" viewBox="669 93 12 12"><path d="M672.8 95.7 L676.4 99 L672.8 102.3" fill="none" stroke="#606060" stroke-width="2.3"/></svg>
<div class="a" style="left:633px;top:92px;width:33px;height:15px;background:#cdcdcd;"></div>
<div class="a" style="left:227px;top:116px;width:546px;height:457px;background:#303030;"></div>
<div class="a" style="left:773px;top:116px;width:1px;height:458px;background:#fff;"></div>
<div class="a" style="left:227px;top:573px;width:547px;height:1px;background:#fff;"></div>
<div class="a" style="left:774px;top:116px;width:17px;height:458px;background:#f0f0f0;"></div>
<div class="a" style="left:774px;top:323px;width:15px;height:42px;background:#cdcdcd;"></div>
<svg class="a" style="left:775px;top:119px;" width="12" height="12" viewBox="775 119 12 12"><path d="M778.2 127.2 L781.5 123.6 L784.8 127.2" fill="none" stroke="#606060" stroke-width="2.3"/></svg>
<svg class="a" style="left:775px;top:558px;" width="12" height="12" viewBox="775 558 12 12"><path d="M778.2 562.3 L781.5 565.9 L784.8 562.3" fill="none" stroke="#606060" stroke-width="2.3"/></svg>
<div class="a" style="left:227px;top:574px;width:547px;height:17px;background:#f0f0f0;"></div>
<div class="a" style="left:475px;top:574px;width:51px;height:15px;background:#cdcdcd;"></div>
<svg class="a" style="left:229px;top:575px;" width="12" height="12" viewBox="229 575 12 12"><path d="M237.2 578.2 L233.6 581.5 L237.2 584.8" fill="none" stroke="#606060" stroke-width="2.3"/></svg>
<svg class="a" style="left:758px;top:575px;" width="12" height="12" viewBox="758 575 12 12"><path d="M762.3 578.2 L765.9 581.5 L762.3 584.8" fill="none" stroke="#606060" stroke-width="2.3"/></svg>
<div class="a" style="left:774px;top:574px;width:17px;height:17px;background:#f0f0f0;"></div>
<svg class="a" style="left:774px;top:574px;" width="17" height="17" viewBox="774 574 17 17"><rect x="785" y="580" width="2" height="2" fill="#b9b9b9"/><rect x="782" y="583" width="2" height="2" fill="#b9b9b9"/><rect x="785" y="583" width="2" height="2" fill="#b9b9b9"/><rect x="779" y="586" width="2" height="2" fill="#b9b9b9"/><rect x="782" y="586" width="2" height="2" fill="#b9b9b9"/><rect x="785" y="586" width="2" height="2" fill="#b9b9b9"/></svg>
<svg class="a" style="left:227px;top:116px" width="546" height="457" viewBox="227 116 546 457" shape-rendering="crispEdges"><path d="M313 340h1v1h-1zM313 341h1v1h-1zM314 336h1v1h-1zM314 337h1v1h-1zM314 339h1v1h-1zM314 340h1v1h-1zM314 341h1v1h-1zM314 348h1v1h-1zM314 349h1v1h-1zM315 336h1v1h-1zM315 337h1v1h-1zM315 339h1v1h-1zM315 340h1v1h-1zM315 341h1v1h-1zM315 348h1v1h-1zM315 349h1v1h-1zM315 351h1v1h-1zM315 352h1v1h-1zM315 353h1v1h-1zM315 354h1v1h-1zM316 340h1v1h-1zM316 343h1v1h-1zM316 344h1v1h-1zM316 348h1v1h-1zM316 349h1v1h-1zM316 351h1v1h-1zM316 352h1v1h-1zM316 353h1v1h-1zM316 354h1v1h-1zM317 343h1v1h-1zM317 344h1v1h-1zM317 349h1v1h-1zM331 336h1v1h-1zM331 337h1v1h-1zM331 342h1v1h-1zM331 353h1v1h-1zM331 354h1v1h-1zM332 336h1v1h-1zM332 337h1v1h-1zM332 342h1v1h-1zM332 343h1v1h-1zM332 348h1v1h-1zM332 353h1v1h-1zM332 354h1v1h-1zM333 337h1v1h-1zM333 338h1v1h-1zM333 347h1v1h-1zM333 348h1v1h-1zM333 352h1v1h-1zM333 353h1v1h-1zM334 337h1v1h-1zM334 352h1v1h-1zM347 336h1v1h-1zM347 337h1v1h-1zM347 342h1v1h-1zM348 336h1v1h-1zM348 337h1v1h-1zM348 342h1v1h-1zM348 343h1v1h-1zM348 348h1v1h-1zM348 353h1v1h-1zM348 354h1v1h-1zM349 347h1v1h-1zM349 348h1v1h-1zM349 353h1v1h-1zM349 354h1v1h-1zM358 329h1v1h-1zM358 330h1v1h-1zM358 360h1v1h-1zM358 361h1v1h-1zM359 329h1v1h-1zM359 360h1v1h-1zM363 336h1v1h-1zM363 337h1v1h-1zM363 342h1v1h-1zM364 336h1v1h-1zM364 337h1v1h-1zM364 342h1v1h-1zM364 343h1v1h-1zM364 348h1v1h-1zM364 353h1v1h-1zM364 354h1v1h-1zM365 347h1v1h-1zM365 348h1v1h-1zM365 353h1v1h-1zM365 354h1v1h-1zM379 336h1v1h-1zM379 337h1v1h-1zM379 342h1v1h-1zM380 336h1v1h-1zM380 337h1v1h-1zM380 342h1v1h-1zM380 343h1v1h-1zM380 348h1v1h-1zM380 353h1v1h-1zM380 354h1v1h-1zM381 321h1v1h-1zM381 322h1v1h-1zM381 347h1v1h-1zM381 348h1v1h-1zM381 353h1v1h-1zM381 354h1v1h-1zM381 368h1v1h-1zM381 369h1v1h-1zM382 321h1v1h-1zM382 368h1v1h-1zM395 336h1v1h-1zM395 337h1v1h-1zM395 342h1v1h-1zM396 336h1v1h-1zM396 337h1v1h-1zM396 342h1v1h-1zM396 343h1v1h-1zM396 348h1v1h-1zM396 353h1v1h-1zM396 354h1v1h-1zM397 347h1v1h-1zM397 348h1v1h-1zM397 353h1v1h-1zM397 354h1v1h-1zM405 313h1v1h-1zM405 314h1v1h-1zM405 376h1v1h-1zM405 377h1v1h-1zM406 313h1v1h-1zM406 376h1v1h-1zM410 336h1v1h-1zM410 337h1v1h-1zM410 342h1v1h-1zM410 343h1v1h-1zM410 347h1v1h-1zM410 348h1v1h-1zM411 336h1v1h-1zM411 337h1v1h-1zM411 342h1v1h-1zM411 343h1v1h-1zM411 347h1v1h-1zM411 353h1v1h-1zM411 354h1v1h-1zM412 341h1v1h-1zM412 342h1v1h-1zM412 348h1v1h-1zM412 349h1v1h-1zM412 353h1v1h-1zM412 354h1v1h-1zM413 341h1v1h-1zM413 349h1v1h-1zM426 336h1v1h-1zM426 337h1v1h-1zM426 342h1v1h-1zM427 336h1v1h-1zM427 337h1v1h-1zM427 341h1v1h-1zM427 343h1v1h-1zM427 348h1v1h-1zM427 353h1v1h-1zM427 354h1v1h-1zM428 342h1v1h-1zM428 347h1v1h-1zM428 349h1v1h-1zM428 353h1v1h-1zM428 354h1v1h-1zM429 305h1v1h-1zM429 306h1v1h-1zM429 348h1v1h-1zM429 384h1v1h-1zM429 385h1v1h-1zM430 305h1v1h-1zM430 384h1v1h-1zM437 332h1v1h-1zM437 333h1v1h-1zM438 332h1v1h-1zM439 357h1v1h-1zM439 358h1v1h-1zM440 357h1v1h-1zM442 336h1v1h-1zM442 337h1v1h-1zM442 342h1v1h-1zM443 336h1v1h-1zM443 337h1v1h-1zM443 341h1v1h-1zM443 343h1v1h-1zM443 348h1v1h-1zM443 353h1v1h-1zM443 354h1v1h-1zM444 342h1v1h-1zM444 347h1v1h-1zM444 349h1v1h-1zM444 353h1v1h-1zM444 354h1v1h-1zM445 348h1v1h-1zM453 297h1v1h-1zM453 298h1v1h-1zM453 392h1v1h-1zM453 393h1v1h-1zM454 297h1v1h-1zM454 392h1v1h-1zM458 336h1v1h-1zM458 337h1v1h-1zM458 342h1v1h-1zM459 336h1v1h-1zM459 337h1v1h-1zM459 341h1v1h-1zM459 343h1v1h-1zM459 348h1v1h-1zM459 353h1v1h-1zM459 354h1v1h-1zM460 342h1v1h-1zM460 347h1v1h-1zM460 349h1v1h-1zM460 353h1v1h-1zM460 354h1v1h-1zM461 324h1v1h-1zM461 325h1v1h-1zM461 348h1v1h-1zM462 324h1v1h-1zM462 365h1v1h-1zM462 366h1v1h-1zM463 365h1v1h-1zM474 336h1v1h-1zM474 337h1v1h-1zM474 342h1v1h-1zM475 336h1v1h-1zM475 337h1v1h-1zM475 341h1v1h-1zM475 343h1v1h-1zM475 348h1v1h-1zM475 353h1v1h-1zM475 354h1v1h-1zM476 342h1v1h-1zM476 347h1v1h-1zM476 349h1v1h-1zM476 353h1v1h-1zM476 354h1v1h-1zM477 266h1v1h-1zM477 274h1v1h-1zM477 275h1v1h-1zM477 289h1v1h-1zM477 290h1v1h-1zM477 348h1v1h-1zM477 400h1v1h-1zM477 401h1v1h-1zM477 414h1v1h-1zM477 415h1v1h-1zM478 265h1v1h-1zM478 267h1v1h-1zM478 274h1v1h-1zM478 276h1v1h-1zM478 289h1v1h-1zM478 400h1v1h-1zM478 414h1v1h-1zM478 415h1v1h-1zM478 416h1v1h-1zM478 422h1v1h-1zM478 424h1v1h-1zM479 265h1v1h-1zM479 267h1v1h-1zM479 274h1v1h-1zM479 275h1v1h-1zM479 414h1v1h-1zM479 415h1v1h-1zM479 416h1v1h-1zM480 265h1v1h-1zM480 266h1v1h-1zM480 267h1v1h-1zM480 274h1v1h-1zM480 275h1v1h-1zM480 414h1v1h-1zM480 415h1v1h-1zM480 416h1v1h-1zM481 414h1v1h-1zM481 415h1v1h-1zM481 416h1v1h-1zM481 424h1v1h-1zM483 266h1v1h-1zM483 275h1v1h-1zM483 418h1v1h-1zM483 421h1v1h-1zM484 264h1v1h-1zM484 265h1v1h-1zM484 266h1v1h-1zM484 274h1v1h-1zM484 276h1v1h-1zM484 277h1v1h-1zM484 289h1v1h-1zM484 290h1v1h-1zM484 400h1v1h-1zM484 401h1v1h-1zM485 264h1v1h-1zM485 265h1v1h-1zM485 266h1v1h-1zM485 275h1v1h-1zM485 276h1v1h-1zM485 277h1v1h-1zM485 289h1v1h-1zM485 316h1v1h-1zM485 317h1v1h-1zM485 400h1v1h-1zM485 401h1v1h-1zM486 316h1v1h-1zM486 373h1v1h-1zM486 374h1v1h-1zM487 373h1v1h-1zM489 404h1v1h-1zM489 405h1v1h-1zM489 414h1v1h-1zM489 415h1v1h-1zM489 418h1v1h-1zM489 419h1v1h-1zM489 420h1v1h-1zM489 423h1v1h-1zM490 269h1v1h-1zM490 271h1v1h-1zM490 272h1v1h-1zM490 285h1v1h-1zM490 286h1v1h-1zM490 336h1v1h-1zM490 337h1v1h-1zM490 342h1v1h-1zM490 404h1v1h-1zM490 405h1v1h-1zM490 414h1v1h-1zM490 415h1v1h-1zM490 418h1v1h-1zM490 420h1v1h-1zM490 422h1v1h-1zM490 423h1v1h-1zM490 424h1v1h-1zM491 269h1v1h-1zM491 271h1v1h-1zM491 272h1v1h-1zM491 285h1v1h-1zM491 336h1v1h-1zM491 337h1v1h-1zM491 341h1v1h-1zM491 343h1v1h-1zM491 348h1v1h-1zM491 353h1v1h-1zM491 354h1v1h-1zM491 404h1v1h-1zM491 416h1v1h-1zM491 418h1v1h-1zM491 419h1v1h-1zM491 420h1v1h-1zM491 423h1v1h-1zM492 342h1v1h-1zM492 347h1v1h-1zM492 349h1v1h-1zM492 353h1v1h-1zM492 354h1v1h-1zM493 348h1v1h-1zM493 371h1v1h-1zM493 372h1v1h-1zM493 414h1v1h-1zM493 415h1v1h-1zM493 418h1v1h-1zM493 419h1v1h-1zM493 422h1v1h-1zM493 423h1v1h-1zM494 371h1v1h-1zM494 414h1v1h-1zM494 415h1v1h-1zM494 418h1v1h-1zM494 419h1v1h-1zM494 422h1v1h-1zM494 423h1v1h-1zM495 416h1v1h-1zM495 420h1v1h-1zM495 424h1v1h-1zM496 269h1v1h-1zM496 272h1v1h-1zM496 414h1v1h-1zM496 415h1v1h-1zM497 268h1v1h-1zM497 269h1v1h-1zM497 271h1v1h-1zM497 272h1v1h-1zM497 414h1v1h-1zM497 415h1v1h-1zM497 416h1v1h-1zM497 418h1v1h-1zM497 420h1v1h-1zM497 422h1v1h-1zM497 423h1v1h-1zM497 424h1v1h-1zM498 269h1v1h-1zM498 272h1v1h-1zM498 377h1v1h-1zM498 378h1v1h-1zM498 414h1v1h-1zM498 415h1v1h-1zM498 416h1v1h-1zM498 418h1v1h-1zM498 420h1v1h-1zM498 422h1v1h-1zM498 424h1v1h-1zM499 377h1v1h-1zM499 414h1v1h-1zM499 415h1v1h-1zM499 416h1v1h-1zM499 418h1v1h-1zM499 422h1v1h-1zM499 423h1v1h-1zM499 424h1v1h-1zM500 289h1v1h-1zM500 290h1v1h-1zM500 400h1v1h-1zM500 401h1v1h-1zM500 414h1v1h-1zM500 415h1v1h-1zM501 281h1v1h-1zM501 282h1v1h-1zM501 289h1v1h-1zM501 400h1v1h-1zM501 401h1v1h-1zM501 408h1v1h-1zM501 409h1v1h-1zM501 414h1v1h-1zM501 416h1v1h-1zM501 418h1v1h-1zM501 420h1v1h-1zM501 422h1v1h-1zM501 423h1v1h-1zM501 424h1v1h-1zM502 269h1v1h-1zM502 271h1v1h-1zM502 272h1v1h-1zM502 281h1v1h-1zM502 407h1v1h-1zM502 408h1v1h-1zM503 269h1v1h-1zM503 271h1v1h-1zM503 272h1v1h-1zM503 407h1v1h-1zM504 268h1v1h-1zM504 269h1v1h-1zM504 271h1v1h-1zM504 272h1v1h-1zM504 416h1v1h-1zM504 418h1v1h-1zM504 420h1v1h-1zM505 267h1v1h-1zM505 268h1v1h-1zM505 269h1v1h-1zM505 271h1v1h-1zM505 272h1v1h-1zM505 273h1v1h-1zM505 274h1v1h-1zM505 415h1v1h-1zM505 416h1v1h-1zM505 420h1v1h-1zM506 267h1v1h-1zM506 268h1v1h-1zM506 269h1v1h-1zM506 271h1v1h-1zM506 273h1v1h-1zM506 274h1v1h-1zM506 342h1v1h-1zM506 418h1v1h-1zM506 420h1v1h-1zM506 421h1v1h-1zM506 422h1v1h-1zM506 423h1v1h-1zM507 265h1v1h-1zM507 268h1v1h-1zM507 269h1v1h-1zM507 271h1v1h-1zM507 272h1v1h-1zM507 273h1v1h-1zM507 275h1v1h-1zM507 276h1v1h-1zM507 336h1v1h-1zM507 337h1v1h-1zM507 341h1v1h-1zM507 343h1v1h-1zM507 353h1v1h-1zM507 355h1v1h-1zM507 416h1v1h-1zM507 417h1v1h-1zM507 420h1v1h-1zM507 421h1v1h-1zM508 264h1v1h-1zM508 266h1v1h-1zM508 269h1v1h-1zM508 275h1v1h-1zM508 277h1v1h-1zM508 336h1v1h-1zM508 337h1v1h-1zM508 342h1v1h-1zM508 353h1v1h-1zM508 355h1v1h-1zM508 414h1v1h-1zM508 415h1v1h-1zM508 416h1v1h-1zM508 417h1v1h-1zM508 418h1v1h-1zM508 419h1v1h-1zM509 264h1v1h-1zM509 266h1v1h-1zM509 275h1v1h-1zM509 276h1v1h-1zM509 367h1v1h-1zM509 371h1v1h-1zM509 372h1v1h-1zM509 414h1v1h-1zM509 415h1v1h-1zM509 419h1v1h-1zM509 421h1v1h-1zM509 423h1v1h-1zM509 424h1v1h-1zM509 425h1v1h-1zM510 265h1v1h-1zM510 266h1v1h-1zM510 269h1v1h-1zM510 271h1v1h-1zM510 272h1v1h-1zM510 275h1v1h-1zM510 276h1v1h-1zM510 308h1v1h-1zM510 309h1v1h-1zM510 366h1v1h-1zM510 368h1v1h-1zM510 381h1v1h-1zM510 382h1v1h-1zM510 414h1v1h-1zM510 415h1v1h-1zM510 424h1v1h-1zM511 269h1v1h-1zM511 271h1v1h-1zM511 272h1v1h-1zM511 308h1v1h-1zM511 366h1v1h-1zM511 368h1v1h-1zM511 381h1v1h-1zM511 382h1v1h-1zM511 414h1v1h-1zM511 415h1v1h-1zM511 418h1v1h-1zM511 421h1v1h-1zM511 423h1v1h-1zM511 424h1v1h-1zM511 425h1v1h-1zM512 367h1v1h-1zM512 381h1v1h-1zM512 423h1v1h-1zM512 424h1v1h-1zM513 263h1v1h-1zM513 264h1v1h-1zM513 269h1v1h-1zM513 272h1v1h-1zM513 277h1v1h-1zM513 278h1v1h-1zM513 284h1v1h-1zM513 285h1v1h-1zM513 341h1v1h-1zM513 342h1v1h-1zM513 352h1v1h-1zM513 353h1v1h-1zM513 412h1v1h-1zM513 413h1v1h-1zM514 263h1v1h-1zM514 264h1v1h-1zM514 268h1v1h-1zM514 269h1v1h-1zM514 271h1v1h-1zM514 272h1v1h-1zM514 273h1v1h-1zM514 277h1v1h-1zM514 284h1v1h-1zM514 285h1v1h-1zM514 341h1v1h-1zM514 352h1v1h-1zM514 405h1v1h-1zM514 406h1v1h-1zM514 412h1v1h-1zM514 417h1v1h-1zM514 418h1v1h-1zM514 421h1v1h-1zM514 422h1v1h-1zM514 426h1v1h-1zM515 260h1v1h-1zM515 261h1v1h-1zM515 268h1v1h-1zM515 272h1v1h-1zM515 284h1v1h-1zM515 285h1v1h-1zM515 288h1v1h-1zM515 289h1v1h-1zM515 405h1v1h-1zM515 406h1v1h-1zM515 417h1v1h-1zM515 418h1v1h-1zM515 421h1v1h-1zM515 422h1v1h-1zM515 428h1v1h-1zM516 260h1v1h-1zM516 262h1v1h-1zM516 288h1v1h-1zM516 289h1v1h-1zM516 400h1v1h-1zM516 401h1v1h-1zM516 403h1v1h-1zM516 405h1v1h-1zM516 406h1v1h-1zM516 426h1v1h-1zM516 427h1v1h-1zM516 428h1v1h-1zM516 429h1v1h-1zM517 261h1v1h-1zM517 262h1v1h-1zM517 400h1v1h-1zM517 401h1v1h-1zM517 403h1v1h-1zM517 427h1v1h-1zM518 269h1v1h-1zM518 271h1v1h-1zM518 272h1v1h-1zM518 365h1v1h-1zM518 366h1v1h-1zM518 367h1v1h-1zM518 368h1v1h-1zM518 369h1v1h-1zM518 370h1v1h-1zM518 374h1v1h-1zM518 427h1v1h-1zM518 428h1v1h-1zM518 429h1v1h-1zM519 269h1v1h-1zM519 271h1v1h-1zM519 272h1v1h-1zM519 365h1v1h-1zM519 367h1v1h-1zM519 368h1v1h-1zM519 370h1v1h-1zM519 371h1v1h-1zM519 374h1v1h-1zM519 375h1v1h-1zM519 376h1v1h-1zM519 418h1v1h-1zM519 421h1v1h-1zM519 428h1v1h-1zM519 429h1v1h-1zM520 263h1v1h-1zM520 264h1v1h-1zM520 276h1v1h-1zM520 277h1v1h-1zM520 371h1v1h-1zM520 376h1v1h-1zM521 262h1v1h-1zM521 264h1v1h-1zM521 268h1v1h-1zM521 272h1v1h-1zM521 273h1v1h-1zM521 276h1v1h-1zM521 278h1v1h-1zM521 365h1v1h-1zM521 367h1v1h-1zM521 368h1v1h-1zM521 369h1v1h-1zM521 371h1v1h-1zM521 372h1v1h-1zM521 375h1v1h-1zM521 376h1v1h-1zM521 377h1v1h-1zM521 384h1v1h-1zM521 385h1v1h-1zM521 386h1v1h-1zM521 413h1v1h-1zM521 414h1v1h-1zM521 415h1v1h-1zM521 418h1v1h-1zM521 421h1v1h-1zM521 422h1v1h-1zM521 425h1v1h-1zM521 426h1v1h-1zM522 263h1v1h-1zM522 264h1v1h-1zM522 267h1v1h-1zM522 269h1v1h-1zM522 270h1v1h-1zM522 271h1v1h-1zM522 273h1v1h-1zM522 276h1v1h-1zM522 278h1v1h-1zM522 342h1v1h-1zM522 365h1v1h-1zM522 368h1v1h-1zM522 371h1v1h-1zM522 373h1v1h-1zM522 374h1v1h-1zM522 375h1v1h-1zM522 376h1v1h-1zM522 384h1v1h-1zM522 385h1v1h-1zM522 386h1v1h-1zM522 413h1v1h-1zM522 414h1v1h-1zM522 415h1v1h-1zM522 418h1v1h-1zM522 419h1v1h-1zM522 421h1v1h-1zM522 422h1v1h-1zM522 425h1v1h-1zM523 263h1v1h-1zM523 264h1v1h-1zM523 267h1v1h-1zM523 268h1v1h-1zM523 269h1v1h-1zM523 270h1v1h-1zM523 271h1v1h-1zM523 273h1v1h-1zM523 276h1v1h-1zM523 277h1v1h-1zM523 286h1v1h-1zM523 287h1v1h-1zM523 288h1v1h-1zM523 289h1v1h-1zM523 290h1v1h-1zM523 336h1v1h-1zM523 337h1v1h-1zM523 341h1v1h-1zM523 343h1v1h-1zM523 353h1v1h-1zM523 355h1v1h-1zM523 385h1v1h-1zM523 386h1v1h-1zM523 412h1v1h-1zM523 413h1v1h-1zM523 414h1v1h-1zM523 415h1v1h-1zM523 423h1v1h-1zM523 425h1v1h-1zM523 426h1v1h-1zM524 286h1v1h-1zM524 289h1v1h-1zM524 291h1v1h-1zM524 336h1v1h-1zM524 337h1v1h-1zM524 342h1v1h-1zM524 353h1v1h-1zM524 355h1v1h-1zM524 356h1v1h-1zM524 357h1v1h-1zM524 358h1v1h-1zM524 399h1v1h-1zM524 402h1v1h-1zM524 403h1v1h-1zM524 404h1v1h-1zM524 413h1v1h-1zM524 414h1v1h-1zM525 265h1v1h-1zM525 266h1v1h-1zM525 267h1v1h-1zM525 269h1v1h-1zM525 270h1v1h-1zM525 272h1v1h-1zM525 273h1v1h-1zM525 275h1v1h-1zM525 276h1v1h-1zM525 285h1v1h-1zM525 287h1v1h-1zM525 290h1v1h-1zM525 291h1v1h-1zM525 356h1v1h-1zM525 357h1v1h-1zM525 369h1v1h-1zM525 372h1v1h-1zM525 398h1v1h-1zM525 399h1v1h-1zM525 400h1v1h-1zM525 402h1v1h-1zM525 404h1v1h-1zM525 412h1v1h-1zM525 413h1v1h-1zM525 414h1v1h-1zM525 415h1v1h-1zM525 418h1v1h-1zM525 421h1v1h-1zM525 422h1v1h-1zM525 423h1v1h-1zM525 426h1v1h-1zM526 264h1v1h-1zM526 266h1v1h-1zM526 267h1v1h-1zM526 268h1v1h-1zM526 269h1v1h-1zM526 270h1v1h-1zM526 271h1v1h-1zM526 272h1v1h-1zM526 273h1v1h-1zM526 274h1v1h-1zM526 275h1v1h-1zM526 277h1v1h-1zM526 285h1v1h-1zM526 286h1v1h-1zM526 287h1v1h-1zM526 288h1v1h-1zM526 289h1v1h-1zM526 290h1v1h-1zM526 291h1v1h-1zM526 292h1v1h-1zM526 399h1v1h-1zM526 402h1v1h-1zM526 403h1v1h-1zM526 404h1v1h-1zM526 412h1v1h-1zM526 413h1v1h-1zM526 415h1v1h-1zM526 417h1v1h-1zM526 418h1v1h-1zM526 419h1v1h-1zM526 421h1v1h-1zM526 423h1v1h-1zM526 425h1v1h-1zM526 426h1v1h-1zM527 264h1v1h-1zM527 266h1v1h-1zM527 267h1v1h-1zM527 268h1v1h-1zM527 269h1v1h-1zM527 270h1v1h-1zM527 271h1v1h-1zM527 272h1v1h-1zM527 273h1v1h-1zM527 274h1v1h-1zM527 275h1v1h-1zM527 277h1v1h-1zM527 285h1v1h-1zM527 286h1v1h-1zM527 287h1v1h-1zM527 289h1v1h-1zM527 290h1v1h-1zM527 291h1v1h-1zM527 292h1v1h-1zM527 412h1v1h-1zM527 413h1v1h-1zM527 414h1v1h-1zM527 415h1v1h-1zM527 418h1v1h-1zM527 421h1v1h-1zM527 422h1v1h-1zM527 423h1v1h-1zM527 426h1v1h-1zM528 264h1v1h-1zM528 265h1v1h-1zM528 266h1v1h-1zM528 267h1v1h-1zM528 269h1v1h-1zM528 270h1v1h-1zM528 272h1v1h-1zM528 273h1v1h-1zM528 275h1v1h-1zM528 276h1v1h-1zM528 277h1v1h-1zM528 287h1v1h-1zM528 398h1v1h-1zM528 400h1v1h-1zM528 402h1v1h-1zM528 403h1v1h-1zM528 404h1v1h-1zM528 412h1v1h-1zM528 414h1v1h-1zM529 286h1v1h-1zM529 287h1v1h-1zM529 288h1v1h-1zM529 289h1v1h-1zM529 290h1v1h-1zM529 398h1v1h-1zM529 400h1v1h-1zM529 402h1v1h-1zM529 404h1v1h-1zM529 413h1v1h-1zM529 414h1v1h-1zM529 417h1v1h-1zM529 418h1v1h-1zM529 419h1v1h-1zM529 421h1v1h-1zM529 422h1v1h-1zM529 423h1v1h-1zM529 425h1v1h-1zM529 426h1v1h-1zM530 290h1v1h-1zM530 398h1v1h-1zM530 402h1v1h-1zM530 403h1v1h-1zM530 404h1v1h-1zM530 413h1v1h-1zM530 414h1v1h-1zM530 417h1v1h-1zM530 419h1v1h-1zM530 421h1v1h-1zM530 423h1v1h-1zM530 425h1v1h-1zM531 286h1v1h-1zM531 287h1v1h-1zM531 289h1v1h-1zM531 290h1v1h-1zM531 368h1v1h-1zM531 369h1v1h-1zM531 371h1v1h-1zM531 372h1v1h-1zM532 286h1v1h-1zM532 287h1v1h-1zM532 288h1v1h-1zM532 289h1v1h-1zM532 290h1v1h-1zM532 368h1v1h-1zM532 369h1v1h-1zM532 371h1v1h-1zM532 372h1v1h-1zM532 398h1v1h-1zM532 400h1v1h-1zM532 403h1v1h-1zM533 398h1v1h-1zM533 400h1v1h-1zM533 402h1v1h-1zM533 403h1v1h-1zM533 404h1v1h-1zM534 301h1v1h-1zM534 302h1v1h-1zM534 389h1v1h-1zM534 390h1v1h-1zM534 398h1v1h-1zM534 403h1v1h-1zM535 301h1v1h-1zM535 389h1v1h-1zM536 360h1v1h-1zM536 361h1v1h-1zM537 303h1v1h-1zM537 304h1v1h-1zM537 332h1v1h-1zM537 333h1v1h-1zM537 360h1v1h-1zM537 361h1v1h-1zM537 362h1v1h-1zM537 369h1v1h-1zM537 372h1v1h-1zM538 286h1v1h-1zM538 288h1v1h-1zM538 290h1v1h-1zM538 303h1v1h-1zM538 332h1v1h-1zM538 342h1v1h-1zM538 361h1v1h-1zM539 286h1v1h-1zM539 291h1v1h-1zM539 292h1v1h-1zM539 293h1v1h-1zM539 336h1v1h-1zM539 337h1v1h-1zM539 341h1v1h-1zM539 343h1v1h-1zM539 353h1v1h-1zM539 355h1v1h-1zM539 366h1v1h-1zM539 368h1v1h-1zM539 369h1v1h-1zM539 371h1v1h-1zM539 372h1v1h-1zM539 374h1v1h-1zM539 375h1v1h-1zM539 398h1v1h-1zM539 399h1v1h-1zM539 400h1v1h-1zM539 402h1v1h-1zM539 405h1v1h-1zM539 406h1v1h-1zM539 407h1v1h-1zM540 284h1v1h-1zM540 285h1v1h-1zM540 287h1v1h-1zM540 288h1v1h-1zM540 289h1v1h-1zM540 290h1v1h-1zM540 291h1v1h-1zM540 292h1v1h-1zM540 336h1v1h-1zM540 337h1v1h-1zM540 342h1v1h-1zM540 353h1v1h-1zM540 355h1v1h-1zM540 365h1v1h-1zM540 366h1v1h-1zM540 367h1v1h-1zM540 368h1v1h-1zM540 369h1v1h-1zM540 370h1v1h-1zM540 371h1v1h-1zM540 372h1v1h-1zM540 373h1v1h-1zM540 374h1v1h-1zM540 375h1v1h-1zM540 376h1v1h-1zM540 402h1v1h-1zM540 404h1v1h-1zM540 406h1v1h-1zM541 286h1v1h-1zM541 289h1v1h-1zM541 290h1v1h-1zM541 365h1v1h-1zM541 366h1v1h-1zM541 367h1v1h-1zM541 368h1v1h-1zM541 369h1v1h-1zM541 370h1v1h-1zM541 371h1v1h-1zM541 372h1v1h-1zM541 373h1v1h-1zM541 374h1v1h-1zM541 375h1v1h-1zM541 376h1v1h-1zM541 401h1v1h-1zM541 403h1v1h-1zM541 405h1v1h-1zM541 406h1v1h-1zM541 407h1v1h-1zM542 284h1v1h-1zM542 286h1v1h-1zM542 287h1v1h-1zM542 290h1v1h-1zM542 292h1v1h-1zM542 366h1v1h-1zM542 368h1v1h-1zM542 369h1v1h-1zM542 371h1v1h-1zM542 372h1v1h-1zM542 374h1v1h-1zM542 375h1v1h-1zM542 399h1v1h-1zM542 400h1v1h-1zM542 402h1v1h-1zM542 403h1v1h-1zM542 405h1v1h-1zM543 283h1v1h-1zM543 284h1v1h-1zM543 287h1v1h-1zM543 289h1v1h-1zM543 290h1v1h-1zM543 292h1v1h-1zM543 399h1v1h-1zM543 401h1v1h-1zM543 403h1v1h-1zM543 404h1v1h-1zM544 283h1v1h-1zM544 284h1v1h-1zM544 287h1v1h-1zM544 289h1v1h-1zM544 290h1v1h-1zM544 292h1v1h-1zM544 293h1v1h-1zM544 397h1v1h-1zM544 400h1v1h-1zM544 401h1v1h-1zM544 404h1v1h-1zM544 406h1v1h-1zM544 407h1v1h-1zM545 283h1v1h-1zM545 284h1v1h-1zM545 293h1v1h-1zM545 294h1v1h-1zM545 296h1v1h-1zM545 297h1v1h-1zM545 369h1v1h-1zM545 372h1v1h-1zM545 393h1v1h-1zM545 394h1v1h-1zM545 396h1v1h-1zM545 398h1v1h-1zM545 400h1v1h-1zM545 401h1v1h-1zM545 404h1v1h-1zM545 406h1v1h-1zM545 407h1v1h-1zM546 287h1v1h-1zM546 290h1v1h-1zM546 296h1v1h-1zM546 393h1v1h-1zM546 396h1v1h-1zM546 398h1v1h-1zM546 402h1v1h-1zM546 404h1v1h-1zM546 406h1v1h-1zM546 407h1v1h-1zM547 286h1v1h-1zM547 287h1v1h-1zM547 289h1v1h-1zM547 290h1v1h-1zM547 291h1v1h-1zM547 379h1v1h-1zM547 380h1v1h-1zM547 397h1v1h-1zM548 286h1v1h-1zM548 290h1v1h-1zM548 363h1v1h-1zM548 364h1v1h-1zM548 365h1v1h-1zM548 367h1v1h-1zM548 368h1v1h-1zM548 369h1v1h-1zM548 371h1v1h-1zM548 372h1v1h-1zM548 373h1v1h-1zM548 376h1v1h-1zM548 378h1v1h-1zM548 381h1v1h-1zM548 400h1v1h-1zM548 401h1v1h-1zM548 404h1v1h-1zM548 405h1v1h-1zM549 363h1v1h-1zM549 364h1v1h-1zM549 367h1v1h-1zM549 369h1v1h-1zM549 371h1v1h-1zM549 373h1v1h-1zM549 376h1v1h-1zM549 377h1v1h-1zM549 378h1v1h-1zM549 381h1v1h-1zM549 400h1v1h-1zM549 401h1v1h-1zM549 404h1v1h-1zM549 405h1v1h-1zM550 279h1v1h-1zM550 280h1v1h-1zM550 365h1v1h-1zM550 367h1v1h-1zM550 368h1v1h-1zM550 369h1v1h-1zM550 371h1v1h-1zM550 372h1v1h-1zM550 373h1v1h-1zM550 379h1v1h-1zM550 380h1v1h-1zM550 402h1v1h-1zM551 279h1v1h-1zM551 280h1v1h-1zM551 287h1v1h-1zM551 289h1v1h-1zM551 290h1v1h-1zM551 410h1v1h-1zM551 411h1v1h-1zM552 279h1v1h-1zM552 280h1v1h-1zM552 287h1v1h-1zM552 289h1v1h-1zM552 290h1v1h-1zM552 363h1v1h-1zM552 364h1v1h-1zM552 367h1v1h-1zM552 368h1v1h-1zM552 371h1v1h-1zM552 372h1v1h-1zM552 375h1v1h-1zM552 376h1v1h-1zM552 377h1v1h-1zM552 400h1v1h-1zM552 403h1v1h-1zM552 410h1v1h-1zM552 411h1v1h-1zM553 304h1v1h-1zM553 305h1v1h-1zM553 363h1v1h-1zM553 364h1v1h-1zM553 367h1v1h-1zM553 368h1v1h-1zM553 371h1v1h-1zM553 372h1v1h-1zM553 375h1v1h-1zM553 377h1v1h-1zM553 400h1v1h-1zM553 403h1v1h-1zM553 410h1v1h-1zM553 411h1v1h-1zM554 281h1v1h-1zM554 282h1v1h-1zM554 283h1v1h-1zM554 285h1v1h-1zM554 286h1v1h-1zM554 290h1v1h-1zM554 293h1v1h-1zM554 295h1v1h-1zM554 304h1v1h-1zM554 342h1v1h-1zM554 365h1v1h-1zM554 369h1v1h-1zM554 373h1v1h-1zM554 375h1v1h-1zM554 376h1v1h-1zM554 377h1v1h-1zM555 281h1v1h-1zM555 283h1v1h-1zM555 285h1v1h-1zM555 286h1v1h-1zM555 289h1v1h-1zM555 290h1v1h-1zM555 291h1v1h-1zM555 293h1v1h-1zM555 295h1v1h-1zM555 336h1v1h-1zM555 337h1v1h-1zM555 341h1v1h-1zM555 343h1v1h-1zM555 353h1v1h-1zM555 355h1v1h-1zM555 396h1v1h-1zM555 399h1v1h-1zM555 400h1v1h-1zM555 404h1v1h-1zM555 408h1v1h-1zM556 281h1v1h-1zM556 282h1v1h-1zM556 283h1v1h-1zM556 287h1v1h-1zM556 290h1v1h-1zM556 293h1v1h-1zM556 336h1v1h-1zM556 337h1v1h-1zM556 342h1v1h-1zM556 353h1v1h-1zM556 355h1v1h-1zM556 363h1v1h-1zM556 364h1v1h-1zM556 365h1v1h-1zM556 367h1v1h-1zM556 368h1v1h-1zM556 369h1v1h-1zM556 371h1v1h-1zM556 372h1v1h-1zM556 373h1v1h-1zM556 375h1v1h-1zM556 376h1v1h-1zM556 396h1v1h-1zM556 397h1v1h-1zM556 399h1v1h-1zM556 400h1v1h-1zM556 404h1v1h-1zM556 405h1v1h-1zM556 408h1v1h-1zM556 409h1v1h-1zM557 363h1v1h-1zM557 365h1v1h-1zM557 367h1v1h-1zM557 369h1v1h-1zM557 371h1v1h-1zM557 373h1v1h-1zM557 375h1v1h-1zM557 376h1v1h-1zM557 401h1v1h-1zM558 281h1v1h-1zM558 282h1v1h-1zM558 285h1v1h-1zM558 286h1v1h-1zM558 287h1v1h-1zM558 289h1v1h-1zM558 290h1v1h-1zM558 291h1v1h-1zM558 293h1v1h-1zM558 294h1v1h-1zM558 295h1v1h-1zM558 363h1v1h-1zM558 364h1v1h-1zM558 365h1v1h-1zM558 367h1v1h-1zM558 368h1v1h-1zM558 369h1v1h-1zM558 371h1v1h-1zM558 372h1v1h-1zM558 373h1v1h-1zM558 377h1v1h-1zM559 281h1v1h-1zM559 282h1v1h-1zM559 285h1v1h-1zM559 287h1v1h-1zM559 289h1v1h-1zM559 291h1v1h-1zM559 293h1v1h-1zM559 295h1v1h-1zM559 396h1v1h-1zM559 399h1v1h-1zM559 400h1v1h-1zM559 401h1v1h-1zM559 403h1v1h-1zM559 404h1v1h-1zM559 408h1v1h-1zM560 283h1v1h-1zM560 285h1v1h-1zM560 286h1v1h-1zM560 287h1v1h-1zM560 289h1v1h-1zM560 290h1v1h-1zM560 291h1v1h-1zM560 293h1v1h-1zM560 294h1v1h-1zM560 295h1v1h-1zM560 364h1v1h-1zM560 367h1v1h-1zM560 368h1v1h-1zM560 369h1v1h-1zM560 371h1v1h-1zM560 372h1v1h-1zM560 373h1v1h-1zM560 375h1v1h-1zM560 377h1v1h-1zM560 396h1v1h-1zM560 397h1v1h-1zM560 399h1v1h-1zM560 401h1v1h-1zM560 403h1v1h-1zM560 404h1v1h-1zM560 407h1v1h-1zM560 408h1v1h-1zM560 409h1v1h-1zM561 283h1v1h-1zM561 285h1v1h-1zM561 286h1v1h-1zM561 288h1v1h-1zM561 289h1v1h-1zM561 291h1v1h-1zM561 294h1v1h-1zM561 364h1v1h-1zM561 365h1v1h-1zM561 367h1v1h-1zM561 369h1v1h-1zM561 371h1v1h-1zM561 373h1v1h-1zM561 375h1v1h-1zM561 377h1v1h-1zM561 399h1v1h-1zM561 400h1v1h-1zM561 401h1v1h-1zM561 405h1v1h-1zM561 408h1v1h-1zM562 282h1v1h-1zM562 283h1v1h-1zM562 284h1v1h-1zM562 285h1v1h-1zM562 286h1v1h-1zM562 287h1v1h-1zM562 288h1v1h-1zM562 289h1v1h-1zM562 290h1v1h-1zM562 291h1v1h-1zM562 292h1v1h-1zM562 293h1v1h-1zM562 295h1v1h-1zM562 325h1v1h-1zM562 326h1v1h-1zM562 396h1v1h-1zM562 398h1v1h-1zM562 399h1v1h-1zM562 401h1v1h-1zM562 402h1v1h-1zM562 404h1v1h-1zM562 405h1v1h-1zM562 407h1v1h-1zM563 282h1v1h-1zM563 283h1v1h-1zM563 284h1v1h-1zM563 285h1v1h-1zM563 286h1v1h-1zM563 287h1v1h-1zM563 288h1v1h-1zM563 289h1v1h-1zM563 290h1v1h-1zM563 291h1v1h-1zM563 292h1v1h-1zM563 293h1v1h-1zM563 295h1v1h-1zM563 325h1v1h-1zM563 395h1v1h-1zM563 396h1v1h-1zM563 397h1v1h-1zM563 398h1v1h-1zM563 399h1v1h-1zM563 400h1v1h-1zM563 401h1v1h-1zM563 402h1v1h-1zM563 403h1v1h-1zM563 404h1v1h-1zM563 405h1v1h-1zM563 406h1v1h-1zM563 407h1v1h-1zM563 408h1v1h-1zM564 283h1v1h-1zM564 285h1v1h-1zM564 286h1v1h-1zM564 288h1v1h-1zM564 289h1v1h-1zM564 291h1v1h-1zM564 294h1v1h-1zM564 395h1v1h-1zM564 396h1v1h-1zM564 397h1v1h-1zM564 398h1v1h-1zM564 399h1v1h-1zM564 400h1v1h-1zM564 401h1v1h-1zM564 402h1v1h-1zM564 403h1v1h-1zM564 404h1v1h-1zM564 405h1v1h-1zM564 406h1v1h-1zM564 407h1v1h-1zM564 408h1v1h-1zM565 396h1v1h-1zM565 398h1v1h-1zM565 399h1v1h-1zM565 401h1v1h-1zM565 402h1v1h-1zM565 404h1v1h-1zM565 405h1v1h-1zM565 407h1v1h-1zM569 303h1v1h-1zM569 304h1v1h-1zM570 299h1v1h-1zM570 300h1v1h-1zM570 301h1v1h-1zM570 303h1v1h-1zM570 304h1v1h-1zM570 342h1v1h-1zM571 298h1v1h-1zM571 299h1v1h-1zM571 300h1v1h-1zM571 336h1v1h-1zM571 337h1v1h-1zM571 341h1v1h-1zM571 343h1v1h-1zM571 353h1v1h-1zM571 355h1v1h-1zM572 298h1v1h-1zM572 299h1v1h-1zM572 300h1v1h-1zM572 336h1v1h-1zM572 337h1v1h-1zM572 342h1v1h-1zM572 353h1v1h-1zM572 355h1v1h-1zM573 299h1v1h-1zM578 298h1v1h-1zM578 301h1v1h-1zM578 302h1v1h-1zM578 307h1v1h-1zM578 309h1v1h-1zM579 298h1v1h-1zM579 299h1v1h-1zM579 300h1v1h-1zM579 301h1v1h-1zM579 302h1v1h-1zM579 306h1v1h-1zM579 308h1v1h-1zM580 299h1v1h-1zM580 301h1v1h-1zM580 302h1v1h-1zM580 308h1v1h-1zM580 309h1v1h-1zM581 298h1v1h-1zM581 302h1v1h-1zM581 304h1v1h-1zM581 306h1v1h-1zM581 308h1v1h-1zM582 299h1v1h-1zM582 301h1v1h-1zM582 302h1v1h-1zM582 306h1v1h-1zM582 307h1v1h-1zM582 308h1v1h-1zM582 309h1v1h-1zM585 302h1v1h-1zM585 304h1v1h-1zM585 305h1v1h-1zM585 316h1v1h-1zM585 317h1v1h-1zM586 302h1v1h-1zM586 304h1v1h-1zM586 305h1v1h-1zM586 316h1v1h-1zM586 317h1v1h-1zM586 342h1v1h-1zM587 316h1v1h-1zM587 336h1v1h-1zM587 337h1v1h-1zM587 341h1v1h-1zM587 343h1v1h-1zM587 353h1v1h-1zM587 355h1v1h-1zM588 336h1v1h-1zM588 337h1v1h-1zM588 342h1v1h-1zM588 353h1v1h-1zM588 355h1v1h-1zM591 302h1v1h-1zM591 305h1v1h-1zM592 301h1v1h-1zM592 302h1v1h-1zM592 304h1v1h-1zM592 305h1v1h-1zM593 302h1v1h-1zM593 305h1v1h-1zM594 315h1v1h-1zM594 316h1v1h-1zM595 315h1v1h-1zM597 302h1v1h-1zM597 304h1v1h-1zM597 305h1v1h-1zM597 312h1v1h-1zM597 313h1v1h-1zM597 314h1v1h-1zM598 302h1v1h-1zM598 304h1v1h-1zM598 305h1v1h-1zM598 312h1v1h-1zM598 313h1v1h-1zM600 298h1v1h-1zM600 299h1v1h-1zM600 302h1v1h-1zM600 305h1v1h-1zM600 308h1v1h-1zM601 297h1v1h-1zM601 300h1v1h-1zM601 302h1v1h-1zM601 304h1v1h-1zM601 305h1v1h-1zM601 306h1v1h-1zM601 308h1v1h-1zM602 297h1v1h-1zM602 300h1v1h-1zM602 302h1v1h-1zM602 305h1v1h-1zM602 308h1v1h-1zM603 298h1v1h-1zM603 299h1v1h-1zM603 302h1v1h-1zM603 308h1v1h-1zM603 336h1v1h-1zM603 337h1v1h-1zM603 353h1v1h-1zM603 354h1v1h-1zM604 336h1v1h-1zM604 337h1v1h-1zM604 353h1v1h-1zM604 354h1v1h-1zM605 302h1v1h-1zM605 304h1v1h-1zM605 305h1v1h-1zM606 302h1v1h-1zM606 304h1v1h-1zM606 305h1v1h-1zM607 348h1v1h-1zM607 349h1v1h-1zM608 294h1v1h-1zM608 295h1v1h-1zM608 296h1v1h-1zM608 348h1v1h-1zM608 349h1v1h-1zM609 295h1v1h-1zM609 297h1v1h-1zM609 299h1v1h-1zM609 301h1v1h-1zM609 302h1v1h-1zM609 305h1v1h-1zM609 307h1v1h-1zM609 309h1v1h-1zM609 348h1v1h-1zM610 295h1v1h-1zM610 297h1v1h-1zM610 299h1v1h-1zM610 301h1v1h-1zM610 302h1v1h-1zM610 305h1v1h-1zM610 307h1v1h-1zM610 309h1v1h-1zM610 314h1v1h-1zM610 315h1v1h-1zM610 316h1v1h-1zM611 293h1v1h-1zM611 297h1v1h-1zM611 303h1v1h-1zM611 305h1v1h-1zM611 309h1v1h-1zM611 314h1v1h-1zM611 315h1v1h-1zM612 311h1v1h-1zM613 296h1v1h-1zM613 297h1v1h-1zM613 298h1v1h-1zM613 299h1v1h-1zM613 302h1v1h-1zM613 305h1v1h-1zM613 306h1v1h-1zM613 309h1v1h-1zM613 310h1v1h-1zM613 311h1v1h-1zM614 296h1v1h-1zM614 297h1v1h-1zM614 299h1v1h-1zM614 302h1v1h-1zM614 303h1v1h-1zM614 305h1v1h-1zM614 306h1v1h-1zM614 309h1v1h-1zM614 310h1v1h-1zM614 311h1v1h-1zM615 296h1v1h-1zM615 297h1v1h-1zM615 298h1v1h-1zM615 299h1v1h-1zM615 307h1v1h-1zM615 309h1v1h-1zM616 296h1v1h-1zM616 297h1v1h-1zM617 310h1v1h-1zM618 298h1v1h-1zM618 300h1v1h-1zM618 301h1v1h-1zM618 303h1v1h-1zM618 304h1v1h-1zM618 306h1v1h-1zM618 307h1v1h-1zM619 297h1v1h-1zM619 298h1v1h-1zM619 299h1v1h-1zM619 300h1v1h-1zM619 301h1v1h-1zM619 302h1v1h-1zM619 303h1v1h-1zM619 304h1v1h-1zM619 305h1v1h-1zM619 306h1v1h-1zM619 307h1v1h-1zM619 308h1v1h-1zM619 309h1v1h-1zM619 336h1v1h-1zM619 337h1v1h-1zM619 353h1v1h-1zM619 354h1v1h-1zM620 297h1v1h-1zM620 298h1v1h-1zM620 299h1v1h-1zM620 300h1v1h-1zM620 301h1v1h-1zM620 302h1v1h-1zM620 303h1v1h-1zM620 304h1v1h-1zM620 305h1v1h-1zM620 306h1v1h-1zM620 307h1v1h-1zM620 308h1v1h-1zM620 309h1v1h-1zM620 336h1v1h-1zM620 337h1v1h-1zM620 353h1v1h-1zM620 354h1v1h-1zM621 298h1v1h-1zM621 300h1v1h-1zM621 301h1v1h-1zM621 303h1v1h-1zM621 304h1v1h-1zM621 306h1v1h-1zM621 307h1v1h-1zM623 309h1v1h-1zM623 310h1v1h-1zM624 309h1v1h-1zM626 312h1v1h-1zM626 313h1v1h-1zM627 312h1v1h-1zM631 329h1v1h-1zM631 330h1v1h-1zM631 331h1v1h-1zM631 356h1v1h-1zM631 357h1v1h-1zM632 328h1v1h-1zM632 329h1v1h-1zM632 330h1v1h-1zM632 356h1v1h-1zM633 328h1v1h-1zM633 356h1v1h-1zM633 357h1v1h-1zM634 311h1v1h-1zM634 312h1v1h-1zM634 313h1v1h-1zM634 314h1v1h-1zM634 315h1v1h-1zM634 316h1v1h-1zM634 317h1v1h-1zM634 334h1v1h-1zM634 336h1v1h-1zM634 337h1v1h-1zM634 356h1v1h-1zM635 310h1v1h-1zM635 318h1v1h-1zM635 334h1v1h-1zM635 336h1v1h-1zM635 337h1v1h-1zM635 353h1v1h-1zM635 354h1v1h-1zM635 355h1v1h-1zM635 356h1v1h-1zM636 310h1v1h-1zM636 318h1v1h-1zM636 353h1v1h-1zM636 354h1v1h-1zM636 355h1v1h-1zM636 356h1v1h-1zM636 373h1v1h-1zM636 379h1v1h-1zM636 380h1v1h-1zM637 311h1v1h-1zM637 312h1v1h-1zM637 313h1v1h-1zM637 314h1v1h-1zM637 315h1v1h-1zM637 316h1v1h-1zM637 317h1v1h-1zM637 372h1v1h-1zM637 374h1v1h-1zM637 378h1v1h-1zM637 381h1v1h-1zM638 314h1v1h-1zM638 372h1v1h-1zM638 374h1v1h-1zM638 375h1v1h-1zM638 376h1v1h-1zM638 378h1v1h-1zM638 381h1v1h-1zM639 312h1v1h-1zM639 313h1v1h-1zM639 316h1v1h-1zM639 373h1v1h-1zM639 375h1v1h-1zM639 379h1v1h-1zM639 380h1v1h-1zM640 314h1v1h-1zM641 316h1v1h-1zM643 315h1v1h-1zM643 316h1v1h-1zM643 325h1v1h-1zM643 326h1v1h-1zM643 333h1v1h-1zM643 338h1v1h-1zM643 339h1v1h-1zM643 340h1v1h-1zM643 350h1v1h-1zM643 353h1v1h-1zM643 354h1v1h-1zM643 358h1v1h-1zM643 361h1v1h-1zM643 362h1v1h-1zM644 325h1v1h-1zM644 331h1v1h-1zM644 332h1v1h-1zM644 333h1v1h-1zM644 337h1v1h-1zM644 338h1v1h-1zM644 341h1v1h-1zM644 351h1v1h-1zM644 352h1v1h-1zM644 357h1v1h-1zM644 358h1v1h-1zM644 359h1v1h-1zM644 360h1v1h-1zM644 361h1v1h-1zM645 331h1v1h-1zM645 332h1v1h-1zM645 333h1v1h-1zM645 337h1v1h-1zM645 341h1v1h-1zM645 352h1v1h-1zM645 354h1v1h-1zM645 355h1v1h-1zM645 360h1v1h-1zM645 361h1v1h-1zM645 362h1v1h-1zM646 331h1v1h-1zM646 332h1v1h-1zM646 333h1v1h-1zM646 337h1v1h-1zM646 341h1v1h-1zM646 350h1v1h-1zM646 351h1v1h-1zM646 373h1v1h-1zM646 374h1v1h-1zM646 378h1v1h-1zM646 379h1v1h-1zM646 380h1v1h-1zM647 331h1v1h-1zM647 332h1v1h-1zM647 333h1v1h-1zM647 334h1v1h-1zM647 336h1v1h-1zM647 338h1v1h-1zM647 339h1v1h-1zM647 340h1v1h-1zM647 357h1v1h-1zM647 362h1v1h-1zM647 373h1v1h-1zM647 374h1v1h-1zM647 377h1v1h-1zM647 378h1v1h-1zM647 380h1v1h-1zM647 382h1v1h-1zM648 312h1v1h-1zM648 313h1v1h-1zM648 315h1v1h-1zM648 316h1v1h-1zM648 317h1v1h-1zM648 318h1v1h-1zM648 350h1v1h-1zM648 355h1v1h-1zM648 356h1v1h-1zM648 358h1v1h-1zM648 362h1v1h-1zM648 373h1v1h-1zM648 375h1v1h-1zM648 376h1v1h-1zM648 379h1v1h-1zM648 380h1v1h-1zM648 382h1v1h-1zM649 311h1v1h-1zM649 312h1v1h-1zM649 314h1v1h-1zM649 317h1v1h-1zM649 373h1v1h-1zM649 375h1v1h-1zM649 376h1v1h-1zM649 380h1v1h-1zM649 381h1v1h-1zM649 382h1v1h-1zM650 310h1v1h-1zM650 311h1v1h-1zM650 313h1v1h-1zM650 316h1v1h-1zM650 334h1v1h-1zM650 336h1v1h-1zM650 337h1v1h-1zM650 375h1v1h-1zM650 376h1v1h-1zM650 377h1v1h-1zM650 378h1v1h-1zM650 379h1v1h-1zM650 382h1v1h-1zM651 314h1v1h-1zM651 316h1v1h-1zM651 317h1v1h-1zM651 334h1v1h-1zM651 336h1v1h-1zM651 337h1v1h-1zM651 353h1v1h-1zM651 354h1v1h-1zM651 356h1v1h-1zM651 373h1v1h-1zM651 374h1v1h-1zM651 376h1v1h-1zM651 377h1v1h-1zM651 378h1v1h-1zM651 380h1v1h-1zM652 353h1v1h-1zM652 354h1v1h-1zM652 356h1v1h-1zM652 375h1v1h-1zM652 379h1v1h-1zM653 309h1v1h-1zM653 312h1v1h-1zM653 313h1v1h-1zM653 317h1v1h-1zM653 320h1v1h-1zM653 321h1v1h-1zM653 322h1v1h-1zM653 375h1v1h-1zM653 379h1v1h-1zM654 308h1v1h-1zM654 309h1v1h-1zM654 310h1v1h-1zM654 312h1v1h-1zM654 313h1v1h-1zM654 317h1v1h-1zM654 318h1v1h-1zM654 320h1v1h-1zM654 322h1v1h-1zM654 375h1v1h-1zM654 379h1v1h-1zM655 309h1v1h-1zM655 314h1v1h-1zM655 320h1v1h-1zM655 321h1v1h-1zM655 322h1v1h-1zM655 364h1v1h-1zM655 365h1v1h-1zM655 376h1v1h-1zM655 377h1v1h-1zM655 378h1v1h-1zM656 321h1v1h-1zM656 334h1v1h-1zM656 337h1v1h-1zM656 364h1v1h-1zM656 365h1v1h-1zM656 366h1v1h-1zM657 312h1v1h-1zM657 313h1v1h-1zM657 316h1v1h-1zM657 317h1v1h-1zM657 320h1v1h-1zM657 321h1v1h-1zM657 322h1v1h-1zM657 333h1v1h-1zM657 334h1v1h-1zM657 336h1v1h-1zM657 337h1v1h-1zM657 353h1v1h-1zM657 356h1v1h-1zM657 365h1v1h-1zM658 312h1v1h-1zM658 313h1v1h-1zM658 316h1v1h-1zM658 317h1v1h-1zM658 320h1v1h-1zM658 322h1v1h-1zM658 334h1v1h-1zM658 337h1v1h-1zM658 353h1v1h-1zM658 354h1v1h-1zM658 356h1v1h-1zM658 357h1v1h-1zM659 314h1v1h-1zM659 318h1v1h-1zM659 320h1v1h-1zM659 321h1v1h-1zM659 322h1v1h-1zM659 353h1v1h-1zM659 356h1v1h-1zM660 334h1v1h-1zM660 337h1v1h-1zM661 375h1v1h-1zM661 376h1v1h-1zM661 377h1v1h-1zM661 378h1v1h-1zM662 304h1v1h-1zM662 305h1v1h-1zM662 312h1v1h-1zM662 315h1v1h-1zM662 334h1v1h-1zM662 336h1v1h-1zM662 337h1v1h-1zM662 374h1v1h-1zM662 379h1v1h-1zM663 304h1v1h-1zM663 334h1v1h-1zM663 336h1v1h-1zM663 337h1v1h-1zM663 340h1v1h-1zM663 341h1v1h-1zM663 343h1v1h-1zM663 344h1v1h-1zM663 345h1v1h-1zM663 346h1v1h-1zM663 353h1v1h-1zM663 354h1v1h-1zM663 356h1v1h-1zM663 374h1v1h-1zM663 379h1v1h-1zM664 340h1v1h-1zM664 341h1v1h-1zM664 343h1v1h-1zM664 344h1v1h-1zM664 345h1v1h-1zM664 346h1v1h-1zM664 353h1v1h-1zM664 354h1v1h-1zM664 356h1v1h-1zM664 374h1v1h-1zM664 379h1v1h-1zM665 308h1v1h-1zM665 311h1v1h-1zM665 312h1v1h-1zM665 313h1v1h-1zM665 316h1v1h-1zM665 330h1v1h-1zM665 333h1v1h-1zM665 336h1v1h-1zM665 340h1v1h-1zM665 341h1v1h-1zM665 349h1v1h-1zM665 375h1v1h-1zM665 376h1v1h-1zM665 377h1v1h-1zM665 378h1v1h-1zM666 307h1v1h-1zM666 308h1v1h-1zM666 309h1v1h-1zM666 311h1v1h-1zM666 313h1v1h-1zM666 315h1v1h-1zM666 316h1v1h-1zM666 317h1v1h-1zM666 329h1v1h-1zM666 330h1v1h-1zM666 333h1v1h-1zM666 335h1v1h-1zM666 336h1v1h-1zM666 337h1v1h-1zM666 340h1v1h-1zM666 341h1v1h-1zM666 349h1v1h-1zM666 352h1v1h-1zM666 356h1v1h-1zM666 359h1v1h-1zM666 372h1v1h-1zM666 373h1v1h-1zM666 375h1v1h-1zM666 378h1v1h-1zM666 381h1v1h-1zM666 382h1v1h-1zM667 308h1v1h-1zM667 311h1v1h-1zM667 312h1v1h-1zM667 313h1v1h-1zM667 316h1v1h-1zM667 330h1v1h-1zM667 333h1v1h-1zM667 336h1v1h-1zM667 340h1v1h-1zM667 341h1v1h-1zM667 349h1v1h-1zM667 351h1v1h-1zM667 352h1v1h-1zM667 353h1v1h-1zM667 356h1v1h-1zM667 359h1v1h-1zM667 360h1v1h-1zM667 361h1v1h-1zM667 368h1v1h-1zM667 369h1v1h-1zM667 371h1v1h-1zM667 374h1v1h-1zM667 380h1v1h-1zM667 383h1v1h-1zM668 349h1v1h-1zM668 352h1v1h-1zM668 356h1v1h-1zM668 359h1v1h-1zM668 368h1v1h-1zM668 371h1v1h-1zM668 374h1v1h-1zM668 380h1v1h-1zM668 383h1v1h-1zM669 307h1v1h-1zM669 309h1v1h-1zM669 311h1v1h-1zM669 312h1v1h-1zM669 313h1v1h-1zM669 316h1v1h-1zM669 349h1v1h-1zM669 372h1v1h-1zM669 373h1v1h-1zM669 375h1v1h-1zM669 378h1v1h-1zM669 381h1v1h-1zM669 382h1v1h-1zM670 307h1v1h-1zM670 309h1v1h-1zM670 311h1v1h-1zM670 313h1v1h-1zM670 316h1v1h-1zM670 317h1v1h-1zM670 334h1v1h-1zM670 336h1v1h-1zM670 337h1v1h-1zM670 374h1v1h-1zM670 375h1v1h-1zM670 376h1v1h-1zM670 378h1v1h-1zM671 307h1v1h-1zM671 311h1v1h-1zM671 312h1v1h-1zM671 313h1v1h-1zM671 319h1v1h-1zM671 320h1v1h-1zM671 325h1v1h-1zM671 326h1v1h-1zM671 334h1v1h-1zM671 336h1v1h-1zM671 337h1v1h-1zM671 353h1v1h-1zM671 354h1v1h-1zM671 356h1v1h-1zM671 375h1v1h-1zM671 378h1v1h-1zM672 319h1v1h-1zM672 320h1v1h-1zM672 325h1v1h-1zM672 353h1v1h-1zM672 354h1v1h-1zM672 356h1v1h-1zM673 307h1v1h-1zM673 308h1v1h-1zM673 311h1v1h-1zM673 312h1v1h-1zM673 313h1v1h-1zM673 315h1v1h-1zM673 316h1v1h-1zM673 319h1v1h-1zM673 320h1v1h-1zM673 328h1v1h-1zM673 329h1v1h-1zM673 332h1v1h-1zM673 333h1v1h-1zM673 334h1v1h-1zM673 336h1v1h-1zM673 337h1v1h-1zM673 341h1v1h-1zM673 363h1v1h-1zM673 364h1v1h-1zM673 386h1v1h-1zM674 307h1v1h-1zM674 308h1v1h-1zM674 311h1v1h-1zM674 313h1v1h-1zM674 315h1v1h-1zM674 316h1v1h-1zM674 319h1v1h-1zM674 320h1v1h-1zM674 328h1v1h-1zM674 329h1v1h-1zM674 332h1v1h-1zM674 334h1v1h-1zM674 336h1v1h-1zM674 337h1v1h-1zM674 340h1v1h-1zM674 341h1v1h-1zM674 342h1v1h-1zM674 344h1v1h-1zM674 363h1v1h-1zM674 375h1v1h-1zM674 378h1v1h-1zM674 385h1v1h-1zM674 387h1v1h-1zM675 309h1v1h-1zM675 311h1v1h-1zM675 312h1v1h-1zM675 313h1v1h-1zM675 317h1v1h-1zM675 319h1v1h-1zM675 320h1v1h-1zM675 330h1v1h-1zM675 332h1v1h-1zM675 333h1v1h-1zM675 334h1v1h-1zM675 338h1v1h-1zM675 341h1v1h-1zM675 347h1v1h-1zM675 348h1v1h-1zM675 349h1v1h-1zM675 351h1v1h-1zM675 353h1v1h-1zM675 355h1v1h-1zM675 356h1v1h-1zM675 359h1v1h-1zM675 360h1v1h-1zM675 375h1v1h-1zM675 378h1v1h-1zM675 385h1v1h-1zM675 387h1v1h-1zM676 347h1v1h-1zM676 349h1v1h-1zM676 351h1v1h-1zM676 353h1v1h-1zM676 355h1v1h-1zM676 356h1v1h-1zM676 359h1v1h-1zM676 360h1v1h-1zM676 386h1v1h-1zM677 328h1v1h-1zM677 329h1v1h-1zM677 332h1v1h-1zM677 333h1v1h-1zM677 334h1v1h-1zM677 336h1v1h-1zM677 337h1v1h-1zM677 338h1v1h-1zM677 340h1v1h-1zM677 341h1v1h-1zM677 342h1v1h-1zM677 344h1v1h-1zM677 347h1v1h-1zM677 348h1v1h-1zM677 349h1v1h-1zM677 351h1v1h-1zM677 357h1v1h-1zM677 361h1v1h-1zM677 371h1v1h-1zM677 375h1v1h-1zM677 378h1v1h-1zM677 379h1v1h-1zM677 380h1v1h-1zM677 382h1v1h-1zM677 384h1v1h-1zM678 328h1v1h-1zM678 329h1v1h-1zM678 332h1v1h-1zM678 334h1v1h-1zM678 336h1v1h-1zM678 338h1v1h-1zM678 340h1v1h-1zM678 342h1v1h-1zM678 344h1v1h-1zM678 362h1v1h-1zM678 363h1v1h-1zM678 371h1v1h-1zM678 372h1v1h-1zM678 374h1v1h-1zM678 375h1v1h-1zM678 376h1v1h-1zM678 378h1v1h-1zM678 380h1v1h-1zM678 382h1v1h-1zM678 384h1v1h-1zM679 330h1v1h-1zM679 332h1v1h-1zM679 333h1v1h-1zM679 334h1v1h-1zM679 336h1v1h-1zM679 337h1v1h-1zM679 338h1v1h-1zM679 340h1v1h-1zM679 341h1v1h-1zM679 342h1v1h-1zM679 348h1v1h-1zM679 351h1v1h-1zM679 352h1v1h-1zM679 355h1v1h-1zM679 356h1v1h-1zM679 357h1v1h-1zM679 359h1v1h-1zM679 360h1v1h-1zM679 361h1v1h-1zM679 362h1v1h-1zM679 363h1v1h-1zM679 375h1v1h-1zM679 378h1v1h-1zM679 379h1v1h-1zM679 380h1v1h-1zM679 382h1v1h-1zM680 348h1v1h-1zM680 349h1v1h-1zM680 351h1v1h-1zM680 352h1v1h-1zM680 355h1v1h-1zM680 357h1v1h-1zM680 359h1v1h-1zM680 361h1v1h-1zM680 362h1v1h-1zM680 363h1v1h-1zM681 328h1v1h-1zM681 329h1v1h-1zM681 330h1v1h-1zM681 333h1v1h-1zM681 337h1v1h-1zM681 340h1v1h-1zM681 342h1v1h-1zM681 344h1v1h-1zM681 353h1v1h-1zM681 355h1v1h-1zM681 356h1v1h-1zM681 357h1v1h-1zM681 359h1v1h-1zM681 360h1v1h-1zM681 361h1v1h-1zM681 362h1v1h-1zM681 363h1v1h-1zM681 370h1v1h-1zM681 371h1v1h-1zM681 374h1v1h-1zM681 375h1v1h-1zM681 378h1v1h-1zM681 379h1v1h-1zM681 383h1v1h-1zM682 328h1v1h-1zM682 330h1v1h-1zM682 332h1v1h-1zM682 333h1v1h-1zM682 334h1v1h-1zM682 337h1v1h-1zM682 338h1v1h-1zM682 340h1v1h-1zM682 342h1v1h-1zM682 344h1v1h-1zM682 362h1v1h-1zM682 363h1v1h-1zM682 370h1v1h-1zM682 371h1v1h-1zM682 374h1v1h-1zM682 375h1v1h-1zM682 378h1v1h-1zM682 379h1v1h-1zM682 382h1v1h-1zM682 383h1v1h-1zM682 384h1v1h-1zM683 328h1v1h-1zM683 329h1v1h-1zM683 330h1v1h-1zM683 333h1v1h-1zM683 340h1v1h-1zM683 347h1v1h-1zM683 348h1v1h-1zM683 349h1v1h-1zM683 352h1v1h-1zM683 356h1v1h-1zM683 359h1v1h-1zM683 361h1v1h-1zM683 372h1v1h-1zM683 376h1v1h-1zM683 380h1v1h-1zM683 383h1v1h-1zM684 347h1v1h-1zM684 349h1v1h-1zM684 352h1v1h-1zM684 353h1v1h-1zM684 356h1v1h-1zM684 357h1v1h-1zM684 359h1v1h-1zM684 361h1v1h-1zM685 328h1v1h-1zM685 329h1v1h-1zM685 330h1v1h-1zM685 332h1v1h-1zM685 333h1v1h-1zM685 337h1v1h-1zM685 341h1v1h-1zM685 344h1v1h-1zM685 347h1v1h-1zM685 348h1v1h-1zM685 349h1v1h-1zM685 359h1v1h-1zM685 370h1v1h-1zM685 371h1v1h-1zM685 372h1v1h-1zM685 375h1v1h-1zM685 378h1v1h-1zM685 380h1v1h-1zM685 383h1v1h-1zM686 370h1v1h-1zM686 372h1v1h-1zM686 374h1v1h-1zM686 375h1v1h-1zM686 376h1v1h-1zM686 378h1v1h-1zM686 380h1v1h-1zM686 382h1v1h-1zM686 383h1v1h-1zM686 384h1v1h-1zM687 347h1v1h-1zM687 348h1v1h-1zM687 351h1v1h-1zM687 352h1v1h-1zM687 353h1v1h-1zM687 355h1v1h-1zM687 356h1v1h-1zM687 359h1v1h-1zM687 360h1v1h-1zM687 361h1v1h-1zM687 370h1v1h-1zM687 371h1v1h-1zM687 372h1v1h-1zM687 375h1v1h-1zM687 378h1v1h-1zM687 383h1v1h-1z" fill="#fff"/></svg>
</body></html>
